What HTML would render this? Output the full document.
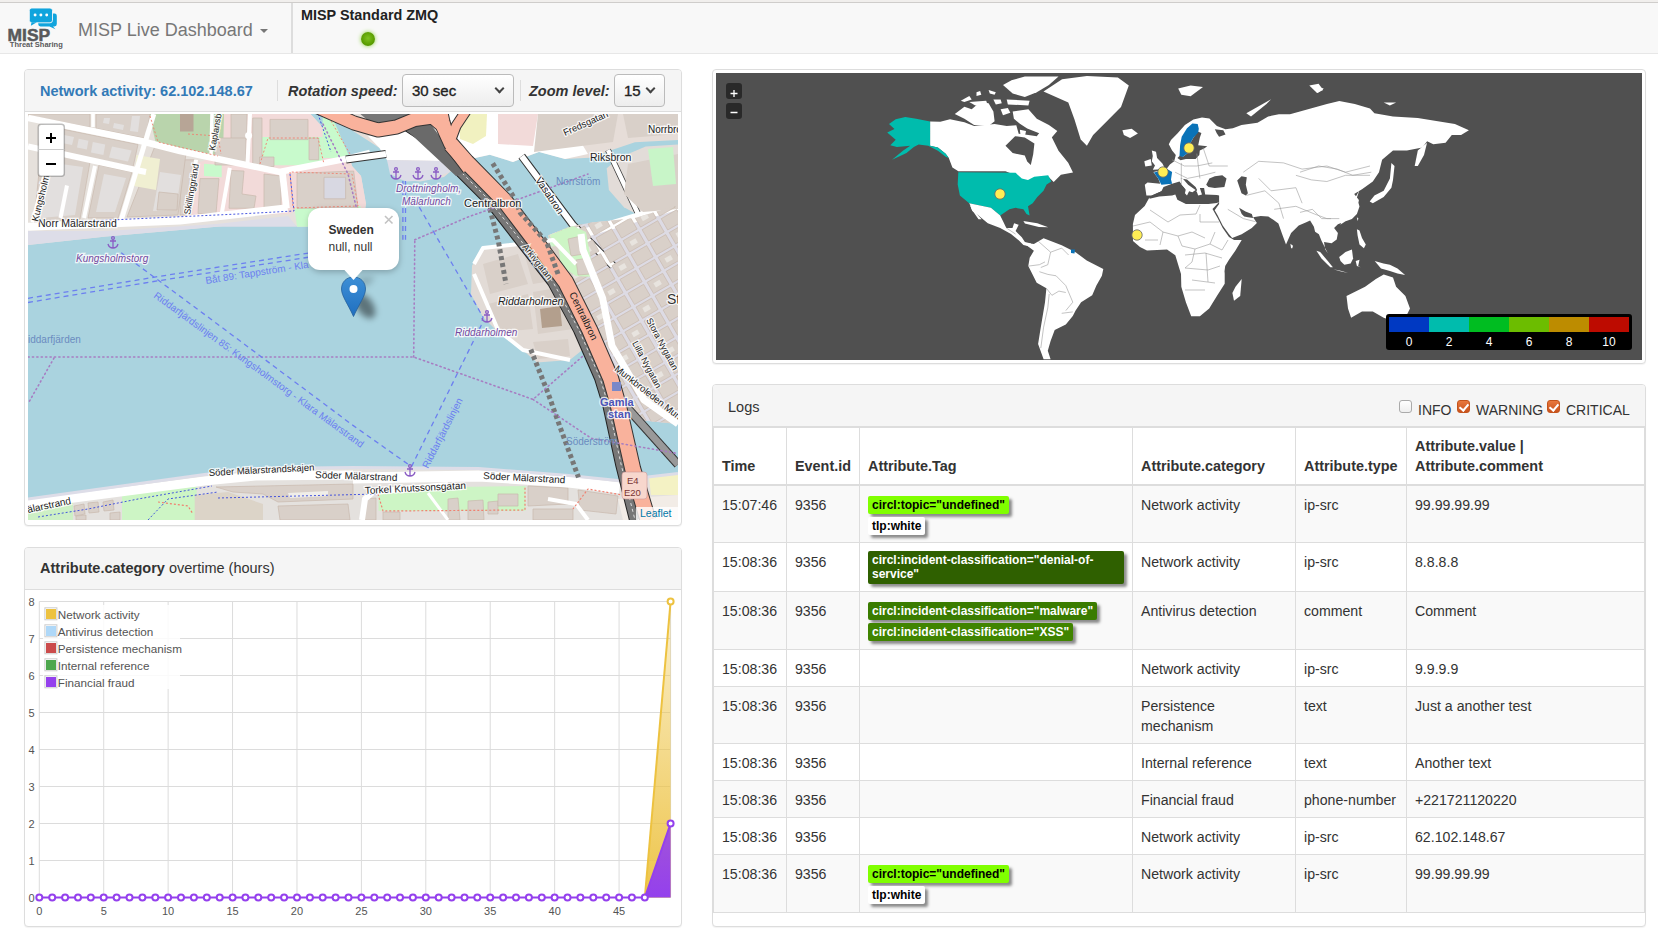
<!DOCTYPE html>
<html><head><meta charset="utf-8">
<style>
*{box-sizing:border-box;margin:0;padding:0}
html,body{width:1658px;height:936px;overflow:hidden;background:#fff;font-family:"Liberation Sans",sans-serif;font-size:14px;color:#333;line-height:20px}
.abs{position:absolute}
#topstrip{left:0;top:0;width:1658px;height:3px;background:#f1efed;border-bottom:1px solid #cfcdcb}
#nav{left:0;top:3px;width:1658px;height:51px;background:#f8f8f8;border-bottom:1px solid #e7e7e7}
#navdiv{left:291px;top:3px;width:2px;height:50px;background:#ddd}
.panel{position:absolute;border:1px solid #ddd;border-radius:4px;background:#fff;overflow:hidden;box-shadow:0 1px 1px rgba(0,0,0,.05)}
.ph{position:absolute;left:0;top:0;right:0;background:#f5f5f5;border-bottom:1px solid #ddd}
.sel{position:absolute;border:1px solid #bbb;border-radius:4px;background:linear-gradient(#fff,#ededed);font-size:15px;color:#222}
.chev{position:absolute;width:7px;height:7px;border-right:2px solid #444;border-bottom:2px solid #444;transform:rotate(45deg)}
table.t{position:absolute;border-collapse:collapse;font-size:14px}
table.t td,table.t th{border:1px solid #ddd;padding:8px;vertical-align:top;line-height:20px;text-align:left}
table.t td{padding:9px 8px 7px;font-size:14.15px}
table.t th{vertical-align:bottom;border-bottom:2px solid #ddd;font-weight:bold;font-size:14.4px}
table.t tr.odd td{background:#f9f9f9}
.lbl{display:block;width:fit-content;font-weight:bold;font-size:12px;line-height:14px;padding:2px 4px 2px 4px;border-radius:2px;box-shadow:3px 3px 3px rgba(0,0,0,.45);margin-top:1px}
.lbl.l2{margin-top:3px}
.ch{height:20px}
.cb{width:13px;height:13px;border:1px solid #aaa;border-radius:3px;background:linear-gradient(#fff,#eee)}
.cb.on{border:1px solid #c4541c;background:linear-gradient(#e8783e,#c9521c)}
.cb.on:after{content:"";position:absolute;left:3px;top:1px;width:4px;height:7px;border-right:2px solid #fff;border-bottom:2px solid #fff;transform:rotate(40deg)}
</style></head><body>
<div id="topstrip" class="abs"></div>
<div id="nav" class="abs"></div>
<div id="navdiv" class="abs"></div>
<!-- logo -->
<svg class="abs" style="left:0;top:0" width="70" height="52" viewBox="0 0 70 52">
  <path d="M40.5,13.4 h14 a2.3,2.3 0 0 1 2.3,2.3 v8.4 a2.3,2.3 0 0 1 -2.3,2.3 h-1.5 l2.5,2.8 -6,-2.8 h-9 a2.3,2.3 0 0 1 -2.3,-2.3 v-8.4 a2.3,2.3 0 0 1 2.3,-2.3z" fill="#10a4dd"/>
  <rect x="29.3" y="8" width="23.2" height="14.8" rx="2.5" fill="#10a4dd" stroke="#f8f8f8" stroke-width="0.9"/>
  <path d="M31.5,22.3 l-0.6,3.4 6,-3.4z" fill="#10a4dd"/>
  <circle cx="35.1" cy="15" r="1.45" fill="#fff"/><circle cx="40.9" cy="15" r="1.45" fill="#fff"/><circle cx="46.7" cy="15" r="1.45" fill="#fff"/>
  <text x="7.6" y="40.5" font-family="Liberation Sans" font-weight="bold" font-size="16" fill="#58595b" textLength="42.5" lengthAdjust="spacingAndGlyphs" stroke="#58595b" stroke-width="0.5">MISP</text>
  <text x="9.8" y="47.4" font-family="Liberation Sans" font-weight="bold" font-size="7" fill="#58595b" textLength="53" lengthAdjust="spacingAndGlyphs">Threat Sharing</text>
</svg>
<div class="abs" style="left:78px;top:18px;font-size:18px;line-height:24px;color:#777">MISP Live Dashboard</div>
<div class="abs" style="left:260px;top:29px;width:0;height:0;border-left:4px solid transparent;border-right:4px solid transparent;border-top:4px solid #777"></div>
<div class="abs" style="left:301px;top:5px;font-size:14.4px;font-weight:bold;color:#222;line-height:20px">MISP Standard ZMQ</div>
<div class="abs" style="left:361px;top:32px;width:14px;height:14px;border-radius:50%;background:radial-gradient(circle at 50% 45%,#7dc21e 0,#5a9e00 60%,#4a8a00 100%);box-shadow:0 0 4px #8bd23a"></div>

<!-- left panel 1 -->
<div class="panel" style="left:24px;top:69px;width:658px;height:457px">
  <div class="ph" style="height:42px"></div>
</div>
<div class="abs" style="left:40px;top:81px;font-size:14.5px;font-weight:bold;color:#337ab7">Network activity: 62.102.148.67</div>
<div class="abs" style="left:277px;top:80px;width:1px;height:21px;background:#ddd"></div>
<div class="abs" style="left:288px;top:81px;font-size:14.5px;font-weight:bold;font-style:italic;color:#333">Rotation speed:</div>
<div class="sel" style="left:402px;top:74px;width:112px;height:33px"><span class="abs" style="left:9px;top:6px;-webkit-text-stroke:0.35px #222">30 sec</span><span class="chev" style="left:93px;top:10px"></span></div>
<div class="abs" style="left:520px;top:80px;width:1px;height:21px;background:#ddd"></div>
<div class="abs" style="left:529px;top:81px;font-size:14.5px;font-weight:bold;font-style:italic;color:#333">Zoom level:</div>
<div class="sel" style="left:614px;top:74px;width:51px;height:33px"><span class="abs" style="left:9px;top:6px;-webkit-text-stroke:0.35px #222">15</span><span class="chev" style="left:32px;top:10px"></span></div>
<svg class="abs" style="left:28px;top:114px" width="650" height="406" viewBox="0 0 650 406">
<rect x="0" y="0" width="650" height="406" fill="#aad3df"/>
<path d="M0,0 L282.5,0 L321,42 L324,52 L333,62 L338,90 L336,112 L269,112.7 L260,104 L188.6,112.7 L78,122.5 L0,131Z" fill="#e6e1dc" />
<path d="M298.8,0 L351.5,34 L358.8,45.5 L369.4,65 L392,67.4 L416,63 L435.6,46.5 L461.8,40.7 L485,48 L496.7,43.6 L511.2,37.8 L537.3,45 L566.4,43.6 L580.9,36.9 L606.9,28.2 L650,26 L650,0Z" fill="#e6ddd8" />
<path d="M340,22 L356,18 L404,5 L420,30 L428,48 L414,47 L359,46 L351.5,34Z" fill="#ffffff" />
<path d="M359,46 L414,47 L422,58 L400,66 L378,67.6 L362,60Z" fill="#dddde8" />
<path d="M578.7,54.2 L591.7,43.4 L617.7,32.5 L650,30.4 L650,101.9 L615.5,104 L596,93.2 L580.9,75.9Z" fill="#e2dcd8" />
<path d="M520,121.4 L541.8,112.7 L563.5,108.4 L606.9,104 L650,91 L650,310 L598.2,305 L581,285.4 L570,268 L561.4,235.5 L555,203 L541.8,160Z" fill="#dddbe4" />
<path d="M446.4,147.4 L455,134.4 L490,128 L524.5,125.8 L545,150 L552,190 L555,235.5 L541.8,246 L509,248.5 L494,235.5 L468,216 L455,203 L443,180 L444,151.8Z" fill="#e2dbd6" />
<path d="M170,0 L282.5,0 L321,42 L324,52 L333,62 L338,90 L336,95 L269,95 L262,100 L160,103 L166,50 L184,44Z" fill="#f2dad9" />
<path d="M152,0 L196,0 L195,43 L152,36 L128,30 L121,0Z" fill="#b9d4ac" />
<path d="M152,0 L165.5,0 L165.5,17.5 L152,17.5Z" fill="#b7a596" />
<path d="M232.8,22.9 L294.7,22.9 L294.7,51.2 L232.8,51.2Z" fill="#c8facc" />
<path d="M294.7,0 L303,0 L321,42 L320,44 L294.7,44Z" fill="#c8facc" />
<path d="M176,49.8 L193.7,51 L193.7,63.3 L176,62Z" fill="#c8facc" />
<path d="M266.5,94.3 L332.4,92 L336,112 L269,112.7Z" fill="#c8facc" />
<path d="M203,0 L219,0 L219,25.6 L203,25.6Z" fill="#d9d0c9" stroke="#c8b9ad" stroke-width="0.7"/>
<path d="M187,24 L218,24 L218,51 L187,51Z" fill="#d9d0c9" stroke="#c8b9ad" stroke-width="0.7"/>
<path d="M224.7,4 L234,4 L234,52.5 L224.7,52.5Z" fill="#d9d0c9" stroke="#c8b9ad" stroke-width="0.7"/>
<path d="M242,5.4 L280,5.4 L280,25.6 L242,25.6Z" fill="#d9d0c9" stroke="#c8b9ad" stroke-width="0.7"/>
<path d="M281,24 L290.7,24 L290.7,45.8 L281,45.8Z" fill="#d9d0c9" stroke="#c8b9ad" stroke-width="0.7"/>
<path d="M231.5,43 L246,43 L246,52.5 L231.5,52.5Z" fill="#d9d0c9" stroke="#c8b9ad" stroke-width="0.7"/>
<path d="M152,45.8 L166.8,45.8 L162,101 L152,101Z" fill="#d9d0c9" stroke="#c8b9ad" stroke-width="0.7"/>
<path d="M172,64.6 L191,64.6 L188,99.6 L170,99.6Z" fill="#d9d0c9" stroke="#c8b9ad" stroke-width="0.7"/>
<path d="M203,56.5 L216,57 L214,80 L228,82 L226,94.3 L201,94.3Z" fill="#d9d0c9" stroke="#c8b9ad" stroke-width="0.7"/>
<path d="M236,60 L253,62 L253,94.3 L236,94.3Z" fill="#d9d0c9" stroke="#c8b9ad" stroke-width="0.7"/>
<path d="M269,59.3 L325.7,57 L330,94.3 L269,94.3Z" fill="#d9d0c9" stroke="#c8b9ad" stroke-width="0.7"/>
<path d="M296,63.3 L317.6,63.3 L317.6,84.8 L296,84.8Z" fill="#d8d8e2" stroke="#c8b9ad" stroke-width="0.7"/>
<path d="M0,0 L62,0 L62,13.5 L0,1.5Z" fill="#d9d0c9" stroke="#c8b9ad" stroke-width="0.7"/>
<path d="M68,0 L122,0 L118,24.5 L68,14.5Z" fill="#d9d0c9" stroke="#c8b9ad" stroke-width="0.7"/>
<path d="M14,11 L110,30.5 L105,53 L10,33Z" fill="#d9d0c9" stroke="#c8b9ad" stroke-width="0.7"/>
<path d="M127,32 L158,39 L150,101 L99,103Z" fill="#d9d0c9" stroke="#c8b9ad" stroke-width="0.7"/>
<path d="M13,38 L62,48 L52,105 L6,108Z" fill="#d9d0c9" stroke="#c8b9ad" stroke-width="0.7"/>
<path d="M71,51 L104,58 L90,104 L60,104Z" fill="#d9d0c9" stroke="#c8b9ad" stroke-width="0.7"/>
<path d="M50.7,24.8 L60.4,26.8 L58.8,35.6 L49,33.6Z" fill="#e2dfde" />
<path d="M64.8,28 L77.2,30.6 L75.4,41 L63,38.4Z" fill="#e2dfde" />
<path d="M84,32.4 L103.6,36.5 L100,47.5 L81,43.5Z" fill="#e2dfde" />
<path d="M36,21 L46,23 L44,31 L34,29Z" fill="#e2dfde" />
<path d="M18,48 L55,53 L47,101 L12,104Z" fill="#e2dfde" />
<path d="M76,60 L98,64 L87,98 L68,98Z" fill="#e2dfde" />
<path d="M132,58 L153,61 L148,96 L125,97Z" fill="#e2dfde" />
<path d="M76,4 L82,4 L81,10 L75,9Z" fill="#e2dfde" />
<path d="M86,9 L96,11 L95,16 L85,14Z" fill="#e2dfde" />
<path d="M104,2 L112,2 L110,18 L102,17Z" fill="#e2dfde" />
<path d="M108.4,41 L132,45 L128,76 L106,72Z" fill="#f0efd2" />
<path d="M131,78 L150,80 L149,96 L129,96Z" fill="#d9d0c9" stroke="#c8b9ad" stroke-width="0.7"/>
<path d="M0,4 L113,27 L152,37 L251.6,57.9 L320.3,44.4 L342,39" fill="none" stroke="#ffffff" stroke-width="6.5" stroke-linejoin="round" />
<path d="M0,32.4 L108,56 L118,58" fill="none" stroke="#ffffff" stroke-width="6" stroke-linejoin="round" />
<path d="M65,0 L65,13" fill="none" stroke="#ffffff" stroke-width="3.5" stroke-linejoin="round" />
<path d="M125.8,0 L93.2,106" fill="none" stroke="#ffffff" stroke-width="5" stroke-linejoin="round" />
<path d="M67,52 L56,104" fill="none" stroke="#ffffff" stroke-width="4" stroke-linejoin="round" />
<path d="M39,71.5 L32.5,104" fill="none" stroke="#ffffff" stroke-width="4" stroke-linejoin="round" />
<path d="M168,45.8 L160,101" fill="none" stroke="#ffffff" stroke-width="4" stroke-linejoin="round" />
<path d="M201.8,53.9 L193.7,99.6" fill="none" stroke="#ffffff" stroke-width="4" stroke-linejoin="round" />
<path d="M222,0 L219.3,52.5" fill="none" stroke="#ffffff" stroke-width="4" stroke-linejoin="round" />
<circle cx="220.6" cy="21.5" r="3.5" fill="#fff"/>
<path d="M184,0 L183,43" fill="none" stroke="#ffffff" stroke-width="3.5" stroke-linejoin="round" />
<path d="M254.3,57.9 L258.4,94.3" fill="none" stroke="#ffffff" stroke-width="6.7" stroke-linejoin="round" />
<path d="M0,112.7 L152,106.4 L259.7,94.3" fill="none" stroke="#ffffff" stroke-width="8" stroke-linejoin="round" />
<path d="M21.7,39 L4.3,108.4" fill="none" stroke="#ffffff" stroke-width="3.5" stroke-linejoin="round" />
<path d="M318,45.5 L358,40" fill="none" stroke="#333" stroke-width="8" stroke-linejoin="round" />
<path d="M318,45.5 L358,40" fill="none" stroke="#ffffff" stroke-width="6" stroke-linejoin="round" />
<path d="M122,2 L130,28 L190,42" fill="none" stroke="#f08070" stroke-width="0.9" stroke-linejoin="round" stroke-dasharray="2 2"/>
<path d="M160,20 L190,22 L193,40" fill="none" stroke="#f08070" stroke-width="0.9" stroke-linejoin="round" stroke-dasharray="2 2"/>
<path d="M232,50 L240,24 L290,24 L296,50" fill="none" stroke="#f08070" stroke-width="0.9" stroke-linejoin="round" stroke-dasharray="2 2"/>
<path d="M262,58 L265,94 L330,92 L324,60 L262,58" fill="none" stroke="#f08070" stroke-width="0.9" stroke-linejoin="round" stroke-dasharray="2 2"/>
<path d="M299,0 L322,40" fill="none" stroke="#f08070" stroke-width="0.9" stroke-linejoin="round" stroke-dasharray="2 2"/>
<path d="M262,60 L266,97 L210,100 L40,108" fill="none" stroke="#3344dd" stroke-width="0.9" stroke-linejoin="round" stroke-dasharray="2 2"/>
<path d="M290,0 L303,38" fill="none" stroke="#3344dd" stroke-width="0.9" stroke-linejoin="round" stroke-dasharray="2 2"/>
<path d="M0,117 L78,117 L188.6,110 L260,102 L269,112.7 L188.6,112.7 L78,122.5 L0,131Z" fill="#dddde8" />
<path d="M420,0 L520,0 L545,15 L560,40 L537,45 L511,38 L497,43 L485,48 L461.8,40.7 L435.6,46.5Z" fill="#ffffff" />
<path d="M431,0 L459,0 L458,22 L445,30 L432,25Z" fill="#f1f1c0" />
<path d="M470,0 L510,0 L505,32 L470,30Z" fill="#f2dad9" />
<path d="M510,0 L590,0 L585,28 L506,38Z" fill="#d9d0c9" />
<path d="M595,0 L650,0 L650,20 L600,24Z" fill="#d9d0c9" />
<path d="M493.7,42.2 L544.6,110.5 L585,151.8" fill="none" stroke="#333" stroke-width="8" stroke-linejoin="round" />
<path d="M493.7,42.2 L544.6,110.5 L585,151.8" fill="none" stroke="#ffffff" stroke-width="6" stroke-linejoin="round" />
<path d="M580,36 L612,104" fill="none" stroke="#333" stroke-width="6" stroke-linejoin="round" />
<path d="M580,36 L612,104" fill="none" stroke="#ffffff" stroke-width="4.5" stroke-linejoin="round" />
<path d="M553,120 L650,91" fill="none" stroke="#ffffff" stroke-width="9" stroke-linejoin="round" />
<path d="M520,121.4 L541.8,112.7 L548,128 L530,160Z" fill="#d0f5d0" />
<path d="M600,50 L650,40 L650,95 L615,98 L596,80Z" fill="#d9d0c9" />
<path d="M620,35 L645,33 L648,70 L625,72Z" fill="#c8f5c8" />
<clipPath id="gsclip"><path d="M520,121.4 L541.8,112.7 L563.5,108.4 L606.9,104 L650,91 L650,310 L598.2,305 L581,285.4 L570,268 L561.4,235.5 L555,203 L541.8,160Z"/></clipPath>
<g clip-path="url(#gsclip)">
<path d="M413.7,120.6 L420.2,131.8 L435.8,122.8 L429.3,111.6Z" fill="#d9d0c9" stroke="#c8b9ad" stroke-width="0.7"/>
<path d="M432.7,109.6 L439.2,120.8 L454.8,111.8 L448.3,100.6Z" fill="#d9d0c9" stroke="#c8b9ad" stroke-width="0.7"/>
<path d="M439.1,110.5 L441.6,114.9 L447.6,111.4 L445.1,107.0Z" fill="#e8e4df" />
<path d="M451.8,98.6 L458.3,109.8 L473.9,100.8 L467.4,89.6Z" fill="#d9d0c9" stroke="#c8b9ad" stroke-width="0.7"/>
<path d="M470.8,87.6 L477.3,98.8 L492.9,89.8 L486.4,78.6Z" fill="#d9d0c9" stroke="#c8b9ad" stroke-width="0.7"/>
<path d="M489.9,76.6 L496.4,87.8 L512.0,78.8 L505.5,67.6Z" fill="#d9d0c9" stroke="#c8b9ad" stroke-width="0.7"/>
<path d="M496.2,77.5 L498.7,81.9 L504.8,78.4 L502.3,74.0Z" fill="#e8e4df" />
<path d="M508.9,65.6 L515.4,76.8 L531.0,67.8 L524.5,56.6Z" fill="#d9d0c9" stroke="#c8b9ad" stroke-width="0.7"/>
<path d="M528.0,54.6 L534.5,65.8 L550.1,56.8 L543.6,45.6Z" fill="#d9d0c9" stroke="#c8b9ad" stroke-width="0.7"/>
<path d="M547.1,43.6 L553.6,54.8 L569.1,45.8 L562.6,34.6Z" fill="#d9d0c9" stroke="#c8b9ad" stroke-width="0.7"/>
<path d="M553.4,44.5 L555.9,48.9 L561.9,45.4 L559.4,41.0Z" fill="#e8e4df" />
<path d="M566.1,32.6 L572.6,43.8 L588.2,34.8 L581.7,23.6Z" fill="#d9d0c9" stroke="#c8b9ad" stroke-width="0.7"/>
<path d="M585.2,21.6 L591.7,32.8 L607.2,23.8 L600.7,12.6Z" fill="#d9d0c9" stroke="#c8b9ad" stroke-width="0.7"/>
<path d="M604.2,10.6 L610.7,21.8 L626.3,12.8 L619.8,1.6Z" fill="#d9d0c9" stroke="#c8b9ad" stroke-width="0.7"/>
<path d="M610.5,11.5 L613.0,15.9 L619.1,12.4 L616.6,8.0Z" fill="#e8e4df" />
<path d="M623.3,-0.4 L629.8,10.8 L645.3,1.8 L638.8,-9.4Z" fill="#d9d0c9" stroke="#c8b9ad" stroke-width="0.7"/>
<path d="M642.3,-11.4 L648.8,-0.2 L664.4,-9.2 L657.9,-20.4Z" fill="#d9d0c9" stroke="#c8b9ad" stroke-width="0.7"/>
<path d="M661.4,-22.4 L667.9,-11.2 L683.5,-20.2 L677.0,-31.4Z" fill="#d9d0c9" stroke="#c8b9ad" stroke-width="0.7"/>
<path d="M667.7,-21.5 L670.2,-17.1 L676.3,-20.6 L673.8,-25.0Z" fill="#e8e4df" />
<path d="M421.7,134.4 L428.2,145.7 L443.8,136.7 L437.3,125.4Z" fill="#d9d0c9" stroke="#c8b9ad" stroke-width="0.7"/>
<path d="M428.0,135.4 L430.5,139.7 L436.6,136.2 L434.1,131.9Z" fill="#e8e4df" />
<path d="M440.7,123.4 L447.2,134.7 L462.8,125.7 L456.3,114.4Z" fill="#d9d0c9" stroke="#c8b9ad" stroke-width="0.7"/>
<path d="M459.8,112.4 L466.3,123.7 L481.9,114.7 L475.4,103.4Z" fill="#d9d0c9" stroke="#c8b9ad" stroke-width="0.7"/>
<path d="M478.8,101.4 L485.3,112.7 L500.9,103.7 L494.4,92.4Z" fill="#d9d0c9" stroke="#c8b9ad" stroke-width="0.7"/>
<path d="M485.2,102.4 L487.7,106.7 L493.7,103.2 L491.2,98.9Z" fill="#e8e4df" />
<path d="M497.9,90.4 L504.4,101.7 L520.0,92.7 L513.5,81.4Z" fill="#d9d0c9" stroke="#c8b9ad" stroke-width="0.7"/>
<path d="M516.9,79.4 L523.4,90.7 L539.0,81.7 L532.5,70.4Z" fill="#d9d0c9" stroke="#c8b9ad" stroke-width="0.7"/>
<path d="M536.0,68.4 L542.5,79.7 L558.1,70.7 L551.6,59.4Z" fill="#d9d0c9" stroke="#c8b9ad" stroke-width="0.7"/>
<path d="M542.3,69.4 L544.8,73.7 L550.9,70.2 L548.4,65.9Z" fill="#e8e4df" />
<path d="M555.1,57.4 L561.6,68.7 L577.1,59.7 L570.6,48.4Z" fill="#d9d0c9" stroke="#c8b9ad" stroke-width="0.7"/>
<path d="M574.1,46.4 L580.6,57.7 L596.2,48.7 L589.7,37.4Z" fill="#d9d0c9" stroke="#c8b9ad" stroke-width="0.7"/>
<path d="M593.2,35.4 L599.7,46.7 L615.2,37.7 L608.7,26.4Z" fill="#d9d0c9" stroke="#c8b9ad" stroke-width="0.7"/>
<path d="M599.5,36.4 L602.0,40.7 L608.0,37.2 L605.5,32.9Z" fill="#e8e4df" />
<path d="M612.2,24.4 L618.7,35.7 L634.3,26.7 L627.8,15.4Z" fill="#d9d0c9" stroke="#c8b9ad" stroke-width="0.7"/>
<path d="M631.3,13.4 L637.8,24.7 L653.3,15.7 L646.8,4.4Z" fill="#d9d0c9" stroke="#c8b9ad" stroke-width="0.7"/>
<path d="M650.3,2.4 L656.8,13.7 L672.4,4.7 L665.9,-6.6Z" fill="#d9d0c9" stroke="#c8b9ad" stroke-width="0.7"/>
<path d="M656.6,3.4 L659.1,7.7 L665.2,4.2 L662.7,-0.1Z" fill="#e8e4df" />
<path d="M669.4,-8.6 L675.9,2.7 L691.5,-6.3 L685.0,-17.6Z" fill="#d9d0c9" stroke="#c8b9ad" stroke-width="0.7"/>
<path d="M429.7,148.3 L436.2,159.5 L451.8,150.5 L445.3,139.3Z" fill="#d9d0c9" stroke="#c8b9ad" stroke-width="0.7"/>
<path d="M448.7,137.3 L455.2,148.5 L470.8,139.5 L464.3,128.3Z" fill="#d9d0c9" stroke="#c8b9ad" stroke-width="0.7"/>
<path d="M467.8,126.3 L474.3,137.5 L489.9,128.5 L483.4,117.3Z" fill="#d9d0c9" stroke="#c8b9ad" stroke-width="0.7"/>
<path d="M474.1,127.3 L476.6,131.6 L482.7,128.1 L480.2,123.8Z" fill="#e8e4df" />
<path d="M486.8,115.3 L493.3,126.5 L508.9,117.5 L502.4,106.3Z" fill="#d9d0c9" stroke="#c8b9ad" stroke-width="0.7"/>
<path d="M505.9,104.3 L512.4,115.5 L528.0,106.5 L521.5,95.3Z" fill="#d9d0c9" stroke="#c8b9ad" stroke-width="0.7"/>
<path d="M524.9,93.3 L531.4,104.5 L547.0,95.5 L540.5,84.3Z" fill="#d9d0c9" stroke="#c8b9ad" stroke-width="0.7"/>
<path d="M531.3,94.3 L533.8,98.6 L539.8,95.1 L537.3,90.8Z" fill="#e8e4df" />
<path d="M544.0,82.3 L550.5,93.5 L566.1,84.5 L559.6,73.3Z" fill="#d9d0c9" stroke="#c8b9ad" stroke-width="0.7"/>
<path d="M563.1,71.3 L569.6,82.5 L585.1,73.5 L578.6,62.3Z" fill="#d9d0c9" stroke="#c8b9ad" stroke-width="0.7"/>
<path d="M582.1,60.3 L588.6,71.5 L604.2,62.5 L597.7,51.3Z" fill="#d9d0c9" stroke="#c8b9ad" stroke-width="0.7"/>
<path d="M588.4,61.3 L590.9,65.6 L597.0,62.1 L594.5,57.8Z" fill="#e8e4df" />
<path d="M601.2,49.3 L607.7,60.5 L623.2,51.5 L616.7,40.3Z" fill="#d9d0c9" stroke="#c8b9ad" stroke-width="0.7"/>
<path d="M620.2,38.3 L626.7,49.5 L642.3,40.5 L635.8,29.3Z" fill="#d9d0c9" stroke="#c8b9ad" stroke-width="0.7"/>
<path d="M639.3,27.3 L645.8,38.5 L661.3,29.5 L654.8,18.3Z" fill="#d9d0c9" stroke="#c8b9ad" stroke-width="0.7"/>
<path d="M645.6,28.3 L648.1,32.6 L654.2,29.1 L651.7,24.8Z" fill="#e8e4df" />
<path d="M658.3,16.3 L664.8,27.5 L680.4,18.5 L673.9,7.3Z" fill="#d9d0c9" stroke="#c8b9ad" stroke-width="0.7"/>
<path d="M677.4,5.3 L683.9,16.5 L699.5,7.5 L693.0,-3.7Z" fill="#d9d0c9" stroke="#c8b9ad" stroke-width="0.7"/>
<path d="M437.7,162.1 L444.2,173.4 L459.8,164.4 L453.3,153.1Z" fill="#d9d0c9" stroke="#c8b9ad" stroke-width="0.7"/>
<path d="M456.7,151.1 L463.2,162.4 L478.8,153.4 L472.3,142.1Z" fill="#d9d0c9" stroke="#c8b9ad" stroke-width="0.7"/>
<path d="M463.1,152.1 L465.6,156.4 L471.6,152.9 L469.1,148.6Z" fill="#e8e4df" />
<path d="M475.8,140.1 L482.3,151.4 L497.9,142.4 L491.4,131.1Z" fill="#d9d0c9" stroke="#c8b9ad" stroke-width="0.7"/>
<path d="M494.8,129.1 L501.3,140.4 L516.9,131.4 L510.4,120.1Z" fill="#d9d0c9" stroke="#c8b9ad" stroke-width="0.7"/>
<path d="M513.9,118.1 L520.4,129.4 L536.0,120.4 L529.5,109.1Z" fill="#d9d0c9" stroke="#c8b9ad" stroke-width="0.7"/>
<path d="M520.2,119.1 L522.7,123.4 L528.8,119.9 L526.3,115.6Z" fill="#e8e4df" />
<path d="M532.9,107.1 L539.4,118.4 L555.0,109.4 L548.5,98.1Z" fill="#d9d0c9" stroke="#c8b9ad" stroke-width="0.7"/>
<path d="M552.0,96.1 L558.5,107.4 L574.1,98.4 L567.6,87.1Z" fill="#d9d0c9" stroke="#c8b9ad" stroke-width="0.7"/>
<path d="M571.1,85.1 L577.6,96.4 L593.1,87.4 L586.6,76.1Z" fill="#d9d0c9" stroke="#c8b9ad" stroke-width="0.7"/>
<path d="M577.4,86.1 L579.9,90.4 L585.9,86.9 L583.4,82.6Z" fill="#e8e4df" />
<path d="M590.1,74.1 L596.6,85.4 L612.2,76.4 L605.7,65.1Z" fill="#d9d0c9" stroke="#c8b9ad" stroke-width="0.7"/>
<path d="M609.2,63.1 L615.7,74.4 L631.2,65.4 L624.7,54.1Z" fill="#d9d0c9" stroke="#c8b9ad" stroke-width="0.7"/>
<path d="M628.2,52.1 L634.7,63.4 L650.3,54.4 L643.8,43.1Z" fill="#d9d0c9" stroke="#c8b9ad" stroke-width="0.7"/>
<path d="M634.5,53.1 L637.0,57.4 L643.1,53.9 L640.6,49.6Z" fill="#e8e4df" />
<path d="M647.3,41.1 L653.8,52.4 L669.3,43.4 L662.8,32.1Z" fill="#d9d0c9" stroke="#c8b9ad" stroke-width="0.7"/>
<path d="M666.3,30.1 L672.8,41.4 L688.4,32.4 L681.9,21.1Z" fill="#d9d0c9" stroke="#c8b9ad" stroke-width="0.7"/>
<path d="M685.4,19.1 L691.9,30.4 L707.5,21.4 L701.0,10.1Z" fill="#d9d0c9" stroke="#c8b9ad" stroke-width="0.7"/>
<path d="M691.7,20.1 L694.2,24.4 L700.3,20.9 L697.8,16.6Z" fill="#e8e4df" />
<path d="M445.7,176.0 L452.2,187.3 L467.8,178.3 L461.3,167.0Z" fill="#d9d0c9" stroke="#c8b9ad" stroke-width="0.7"/>
<path d="M452.0,177.0 L454.5,181.3 L460.6,177.8 L458.1,173.5Z" fill="#e8e4df" />
<path d="M464.7,165.0 L471.2,176.3 L486.8,167.3 L480.3,156.0Z" fill="#d9d0c9" stroke="#c8b9ad" stroke-width="0.7"/>
<path d="M483.8,154.0 L490.3,165.3 L505.9,156.3 L499.4,145.0Z" fill="#d9d0c9" stroke="#c8b9ad" stroke-width="0.7"/>
<path d="M502.8,143.0 L509.3,154.3 L524.9,145.3 L518.4,134.0Z" fill="#d9d0c9" stroke="#c8b9ad" stroke-width="0.7"/>
<path d="M509.2,144.0 L511.7,148.3 L517.7,144.8 L515.2,140.5Z" fill="#e8e4df" />
<path d="M521.9,132.0 L528.4,143.3 L544.0,134.3 L537.5,123.0Z" fill="#d9d0c9" stroke="#c8b9ad" stroke-width="0.7"/>
<path d="M540.9,121.0 L547.4,132.3 L563.0,123.3 L556.5,112.0Z" fill="#d9d0c9" stroke="#c8b9ad" stroke-width="0.7"/>
<path d="M560.0,110.0 L566.5,121.3 L582.1,112.3 L575.6,101.0Z" fill="#d9d0c9" stroke="#c8b9ad" stroke-width="0.7"/>
<path d="M566.3,111.0 L568.8,115.3 L574.9,111.8 L572.4,107.5Z" fill="#e8e4df" />
<path d="M579.1,99.0 L585.6,110.3 L601.1,101.3 L594.6,90.0Z" fill="#d9d0c9" stroke="#c8b9ad" stroke-width="0.7"/>
<path d="M598.1,88.0 L604.6,99.3 L620.2,90.3 L613.7,79.0Z" fill="#d9d0c9" stroke="#c8b9ad" stroke-width="0.7"/>
<path d="M617.2,77.0 L623.7,88.3 L639.2,79.3 L632.7,68.0Z" fill="#d9d0c9" stroke="#c8b9ad" stroke-width="0.7"/>
<path d="M623.5,78.0 L626.0,82.3 L632.0,78.8 L629.5,74.5Z" fill="#e8e4df" />
<path d="M636.2,66.0 L642.7,77.3 L658.3,68.3 L651.8,57.0Z" fill="#d9d0c9" stroke="#c8b9ad" stroke-width="0.7"/>
<path d="M655.3,55.0 L661.8,66.3 L677.3,57.3 L670.8,46.0Z" fill="#d9d0c9" stroke="#c8b9ad" stroke-width="0.7"/>
<path d="M674.3,44.0 L680.8,55.3 L696.4,46.3 L689.9,35.0Z" fill="#d9d0c9" stroke="#c8b9ad" stroke-width="0.7"/>
<path d="M680.6,45.0 L683.1,49.3 L689.2,45.8 L686.7,41.5Z" fill="#e8e4df" />
<path d="M693.4,33.0 L699.9,44.3 L715.5,35.3 L709.0,24.0Z" fill="#d9d0c9" stroke="#c8b9ad" stroke-width="0.7"/>
<path d="M453.7,189.9 L460.2,201.1 L475.8,192.1 L469.3,180.9Z" fill="#d9d0c9" stroke="#c8b9ad" stroke-width="0.7"/>
<path d="M472.7,178.9 L479.2,190.1 L494.8,181.1 L488.3,169.9Z" fill="#d9d0c9" stroke="#c8b9ad" stroke-width="0.7"/>
<path d="M491.8,167.9 L498.3,179.1 L513.9,170.1 L507.4,158.9Z" fill="#d9d0c9" stroke="#c8b9ad" stroke-width="0.7"/>
<path d="M498.1,168.8 L500.6,173.2 L506.7,169.7 L504.2,165.3Z" fill="#e8e4df" />
<path d="M510.8,156.9 L517.3,168.1 L532.9,159.1 L526.4,147.9Z" fill="#d9d0c9" stroke="#c8b9ad" stroke-width="0.7"/>
<path d="M529.9,145.9 L536.4,157.1 L552.0,148.1 L545.5,136.9Z" fill="#d9d0c9" stroke="#c8b9ad" stroke-width="0.7"/>
<path d="M548.9,134.9 L555.4,146.1 L571.0,137.1 L564.5,125.9Z" fill="#d9d0c9" stroke="#c8b9ad" stroke-width="0.7"/>
<path d="M555.3,135.8 L557.8,140.2 L563.8,136.7 L561.3,132.3Z" fill="#e8e4df" />
<path d="M568.0,123.9 L574.5,135.1 L590.1,126.1 L583.6,114.9Z" fill="#d9d0c9" stroke="#c8b9ad" stroke-width="0.7"/>
<path d="M587.1,112.9 L593.6,124.1 L609.1,115.1 L602.6,103.9Z" fill="#d9d0c9" stroke="#c8b9ad" stroke-width="0.7"/>
<path d="M606.1,101.9 L612.6,113.1 L628.2,104.1 L621.7,92.9Z" fill="#d9d0c9" stroke="#c8b9ad" stroke-width="0.7"/>
<path d="M612.4,102.8 L614.9,107.2 L621.0,103.7 L618.5,99.3Z" fill="#e8e4df" />
<path d="M625.2,90.9 L631.7,102.1 L647.2,93.1 L640.7,81.9Z" fill="#d9d0c9" stroke="#c8b9ad" stroke-width="0.7"/>
<path d="M644.2,79.9 L650.7,91.1 L666.3,82.1 L659.8,70.9Z" fill="#d9d0c9" stroke="#c8b9ad" stroke-width="0.7"/>
<path d="M663.3,68.9 L669.8,80.1 L685.3,71.1 L678.8,59.9Z" fill="#d9d0c9" stroke="#c8b9ad" stroke-width="0.7"/>
<path d="M669.6,69.8 L672.1,74.2 L678.2,70.7 L675.7,66.3Z" fill="#e8e4df" />
<path d="M682.3,57.9 L688.8,69.1 L704.4,60.1 L697.9,48.9Z" fill="#d9d0c9" stroke="#c8b9ad" stroke-width="0.7"/>
<path d="M701.4,46.9 L707.9,58.1 L723.5,49.1 L717.0,37.9Z" fill="#d9d0c9" stroke="#c8b9ad" stroke-width="0.7"/>
<path d="M461.7,203.7 L468.2,215.0 L483.8,206.0 L477.3,194.7Z" fill="#d9d0c9" stroke="#c8b9ad" stroke-width="0.7"/>
<path d="M480.7,192.7 L487.2,204.0 L502.8,195.0 L496.3,183.7Z" fill="#d9d0c9" stroke="#c8b9ad" stroke-width="0.7"/>
<path d="M487.1,193.7 L489.6,198.0 L495.6,194.5 L493.1,190.2Z" fill="#e8e4df" />
<path d="M499.8,181.7 L506.3,193.0 L521.9,184.0 L515.4,172.7Z" fill="#d9d0c9" stroke="#c8b9ad" stroke-width="0.7"/>
<path d="M518.8,170.7 L525.3,182.0 L540.9,173.0 L534.4,161.7Z" fill="#d9d0c9" stroke="#c8b9ad" stroke-width="0.7"/>
<path d="M537.9,159.7 L544.4,171.0 L560.0,162.0 L553.5,150.7Z" fill="#d9d0c9" stroke="#c8b9ad" stroke-width="0.7"/>
<path d="M544.2,160.7 L546.7,165.0 L552.8,161.5 L550.3,157.2Z" fill="#e8e4df" />
<path d="M556.9,148.7 L563.4,160.0 L579.0,151.0 L572.5,139.7Z" fill="#d9d0c9" stroke="#c8b9ad" stroke-width="0.7"/>
<path d="M576.0,137.7 L582.5,149.0 L598.1,140.0 L591.6,128.7Z" fill="#d9d0c9" stroke="#c8b9ad" stroke-width="0.7"/>
<path d="M595.1,126.7 L601.6,138.0 L617.1,129.0 L610.6,117.7Z" fill="#d9d0c9" stroke="#c8b9ad" stroke-width="0.7"/>
<path d="M601.4,127.7 L603.9,132.0 L609.9,128.5 L607.4,124.2Z" fill="#e8e4df" />
<path d="M614.1,115.7 L620.6,127.0 L636.2,118.0 L629.7,106.7Z" fill="#d9d0c9" stroke="#c8b9ad" stroke-width="0.7"/>
<path d="M633.2,104.7 L639.7,116.0 L655.2,107.0 L648.7,95.7Z" fill="#d9d0c9" stroke="#c8b9ad" stroke-width="0.7"/>
<path d="M652.2,93.7 L658.7,105.0 L674.3,96.0 L667.8,84.7Z" fill="#d9d0c9" stroke="#c8b9ad" stroke-width="0.7"/>
<path d="M658.5,94.7 L661.0,99.0 L667.1,95.5 L664.6,91.2Z" fill="#e8e4df" />
<path d="M671.3,82.7 L677.8,94.0 L693.3,85.0 L686.8,73.7Z" fill="#d9d0c9" stroke="#c8b9ad" stroke-width="0.7"/>
<path d="M690.3,71.7 L696.8,83.0 L712.4,74.0 L705.9,62.7Z" fill="#d9d0c9" stroke="#c8b9ad" stroke-width="0.7"/>
<path d="M709.4,60.7 L715.9,72.0 L731.5,63.0 L725.0,51.7Z" fill="#d9d0c9" stroke="#c8b9ad" stroke-width="0.7"/>
<path d="M715.7,61.7 L718.2,66.0 L724.3,62.5 L721.8,58.2Z" fill="#e8e4df" />
<path d="M469.7,217.6 L476.2,228.8 L491.8,219.8 L485.3,208.6Z" fill="#d9d0c9" stroke="#c8b9ad" stroke-width="0.7"/>
<path d="M476.0,218.5 L478.5,222.9 L484.6,219.4 L482.1,215.0Z" fill="#e8e4df" />
<path d="M488.7,206.6 L495.2,217.8 L510.8,208.8 L504.3,197.6Z" fill="#d9d0c9" stroke="#c8b9ad" stroke-width="0.7"/>
<path d="M507.8,195.6 L514.3,206.8 L529.9,197.8 L523.4,186.6Z" fill="#d9d0c9" stroke="#c8b9ad" stroke-width="0.7"/>
<path d="M526.8,184.6 L533.3,195.8 L548.9,186.8 L542.4,175.6Z" fill="#d9d0c9" stroke="#c8b9ad" stroke-width="0.7"/>
<path d="M533.2,185.5 L535.7,189.9 L541.7,186.4 L539.2,182.0Z" fill="#e8e4df" />
<path d="M545.9,173.6 L552.4,184.8 L568.0,175.8 L561.5,164.6Z" fill="#d9d0c9" stroke="#c8b9ad" stroke-width="0.7"/>
<path d="M564.9,162.6 L571.4,173.8 L587.0,164.8 L580.5,153.6Z" fill="#d9d0c9" stroke="#c8b9ad" stroke-width="0.7"/>
<path d="M584.0,151.6 L590.5,162.8 L606.1,153.8 L599.6,142.6Z" fill="#d9d0c9" stroke="#c8b9ad" stroke-width="0.7"/>
<path d="M590.3,152.5 L592.8,156.9 L598.9,153.4 L596.4,149.0Z" fill="#e8e4df" />
<path d="M603.1,140.6 L609.6,151.8 L625.1,142.8 L618.6,131.6Z" fill="#d9d0c9" stroke="#c8b9ad" stroke-width="0.7"/>
<path d="M622.1,129.6 L628.6,140.8 L644.2,131.8 L637.7,120.6Z" fill="#d9d0c9" stroke="#c8b9ad" stroke-width="0.7"/>
<path d="M641.2,118.6 L647.7,129.8 L663.2,120.8 L656.7,109.6Z" fill="#d9d0c9" stroke="#c8b9ad" stroke-width="0.7"/>
<path d="M647.5,119.5 L650.0,123.9 L656.0,120.4 L653.5,116.0Z" fill="#e8e4df" />
<path d="M660.2,107.6 L666.7,118.8 L682.3,109.8 L675.8,98.6Z" fill="#d9d0c9" stroke="#c8b9ad" stroke-width="0.7"/>
<path d="M679.3,96.6 L685.8,107.8 L701.3,98.8 L694.8,87.6Z" fill="#d9d0c9" stroke="#c8b9ad" stroke-width="0.7"/>
<path d="M698.3,85.6 L704.8,96.8 L720.4,87.8 L713.9,76.6Z" fill="#d9d0c9" stroke="#c8b9ad" stroke-width="0.7"/>
<path d="M704.6,86.5 L707.1,90.9 L713.2,87.4 L710.7,83.0Z" fill="#e8e4df" />
<path d="M717.4,74.6 L723.9,85.8 L739.5,76.8 L733.0,65.6Z" fill="#d9d0c9" stroke="#c8b9ad" stroke-width="0.7"/>
<path d="M477.7,231.4 L484.2,242.7 L499.8,233.7 L493.3,222.4Z" fill="#d9d0c9" stroke="#c8b9ad" stroke-width="0.7"/>
<path d="M496.7,220.4 L503.2,231.7 L518.8,222.7 L512.3,211.4Z" fill="#d9d0c9" stroke="#c8b9ad" stroke-width="0.7"/>
<path d="M515.8,209.4 L522.3,220.7 L537.9,211.7 L531.4,200.4Z" fill="#d9d0c9" stroke="#c8b9ad" stroke-width="0.7"/>
<path d="M522.1,210.4 L524.6,214.7 L530.7,211.2 L528.2,206.9Z" fill="#e8e4df" />
<path d="M534.8,198.4 L541.3,209.7 L556.9,200.7 L550.4,189.4Z" fill="#d9d0c9" stroke="#c8b9ad" stroke-width="0.7"/>
<path d="M553.9,187.4 L560.4,198.7 L576.0,189.7 L569.5,178.4Z" fill="#d9d0c9" stroke="#c8b9ad" stroke-width="0.7"/>
<path d="M572.9,176.4 L579.4,187.7 L595.0,178.7 L588.5,167.4Z" fill="#d9d0c9" stroke="#c8b9ad" stroke-width="0.7"/>
<path d="M579.3,177.4 L581.8,181.7 L587.8,178.2 L585.3,173.9Z" fill="#e8e4df" />
<path d="M592.0,165.4 L598.5,176.7 L614.1,167.7 L607.6,156.4Z" fill="#d9d0c9" stroke="#c8b9ad" stroke-width="0.7"/>
<path d="M611.1,154.4 L617.6,165.7 L633.1,156.7 L626.6,145.4Z" fill="#d9d0c9" stroke="#c8b9ad" stroke-width="0.7"/>
<path d="M630.1,143.4 L636.6,154.7 L652.2,145.7 L645.7,134.4Z" fill="#d9d0c9" stroke="#c8b9ad" stroke-width="0.7"/>
<path d="M636.4,144.4 L638.9,148.7 L645.0,145.2 L642.5,140.9Z" fill="#e8e4df" />
<path d="M649.2,132.4 L655.7,143.7 L671.2,134.7 L664.7,123.4Z" fill="#d9d0c9" stroke="#c8b9ad" stroke-width="0.7"/>
<path d="M668.2,121.4 L674.7,132.7 L690.3,123.7 L683.8,112.4Z" fill="#d9d0c9" stroke="#c8b9ad" stroke-width="0.7"/>
<path d="M687.3,110.4 L693.8,121.7 L709.3,112.7 L702.8,101.4Z" fill="#d9d0c9" stroke="#c8b9ad" stroke-width="0.7"/>
<path d="M693.6,111.4 L696.1,115.7 L702.2,112.2 L699.7,107.9Z" fill="#e8e4df" />
<path d="M706.3,99.4 L712.8,110.7 L728.4,101.7 L721.9,90.4Z" fill="#d9d0c9" stroke="#c8b9ad" stroke-width="0.7"/>
<path d="M725.4,88.4 L731.9,99.7 L747.5,90.7 L741.0,79.4Z" fill="#d9d0c9" stroke="#c8b9ad" stroke-width="0.7"/>
<path d="M485.7,245.3 L492.2,256.5 L507.8,247.5 L501.3,236.3Z" fill="#d9d0c9" stroke="#c8b9ad" stroke-width="0.7"/>
<path d="M504.7,234.3 L511.2,245.5 L526.8,236.5 L520.3,225.3Z" fill="#d9d0c9" stroke="#c8b9ad" stroke-width="0.7"/>
<path d="M511.1,235.2 L513.6,239.6 L519.6,236.1 L517.1,231.7Z" fill="#e8e4df" />
<path d="M523.8,223.3 L530.3,234.5 L545.9,225.5 L539.4,214.3Z" fill="#d9d0c9" stroke="#c8b9ad" stroke-width="0.7"/>
<path d="M542.8,212.3 L549.3,223.5 L564.9,214.5 L558.4,203.3Z" fill="#d9d0c9" stroke="#c8b9ad" stroke-width="0.7"/>
<path d="M561.9,201.3 L568.4,212.5 L584.0,203.5 L577.5,192.3Z" fill="#d9d0c9" stroke="#c8b9ad" stroke-width="0.7"/>
<path d="M568.2,202.2 L570.7,206.6 L576.8,203.1 L574.3,198.7Z" fill="#e8e4df" />
<path d="M580.9,190.3 L587.4,201.5 L603.0,192.5 L596.5,181.3Z" fill="#d9d0c9" stroke="#c8b9ad" stroke-width="0.7"/>
<path d="M600.0,179.3 L606.5,190.5 L622.1,181.5 L615.6,170.3Z" fill="#d9d0c9" stroke="#c8b9ad" stroke-width="0.7"/>
<path d="M619.1,168.3 L625.6,179.5 L641.1,170.5 L634.6,159.3Z" fill="#d9d0c9" stroke="#c8b9ad" stroke-width="0.7"/>
<path d="M625.4,169.2 L627.9,173.6 L633.9,170.1 L631.4,165.7Z" fill="#e8e4df" />
<path d="M638.1,157.3 L644.6,168.5 L660.2,159.5 L653.7,148.3Z" fill="#d9d0c9" stroke="#c8b9ad" stroke-width="0.7"/>
<path d="M657.2,146.3 L663.7,157.5 L679.2,148.5 L672.7,137.3Z" fill="#d9d0c9" stroke="#c8b9ad" stroke-width="0.7"/>
<path d="M676.2,135.3 L682.7,146.5 L698.3,137.5 L691.8,126.3Z" fill="#d9d0c9" stroke="#c8b9ad" stroke-width="0.7"/>
<path d="M682.5,136.2 L685.0,140.6 L691.1,137.1 L688.6,132.7Z" fill="#e8e4df" />
<path d="M695.3,124.3 L701.8,135.5 L717.3,126.5 L710.8,115.3Z" fill="#d9d0c9" stroke="#c8b9ad" stroke-width="0.7"/>
<path d="M714.3,113.3 L720.8,124.5 L736.4,115.5 L729.9,104.3Z" fill="#d9d0c9" stroke="#c8b9ad" stroke-width="0.7"/>
<path d="M733.4,102.3 L739.9,113.5 L755.5,104.5 L749.0,93.3Z" fill="#d9d0c9" stroke="#c8b9ad" stroke-width="0.7"/>
<path d="M739.7,103.2 L742.2,107.6 L748.3,104.1 L745.8,99.7Z" fill="#e8e4df" />
<path d="M493.7,259.1 L500.2,270.4 L515.8,261.4 L509.3,250.1Z" fill="#d9d0c9" stroke="#c8b9ad" stroke-width="0.7"/>
<path d="M500.0,260.1 L502.5,264.4 L508.6,260.9 L506.1,256.6Z" fill="#e8e4df" />
<path d="M512.7,248.1 L519.2,259.4 L534.8,250.4 L528.3,239.1Z" fill="#d9d0c9" stroke="#c8b9ad" stroke-width="0.7"/>
<path d="M531.8,237.1 L538.3,248.4 L553.9,239.4 L547.4,228.1Z" fill="#d9d0c9" stroke="#c8b9ad" stroke-width="0.7"/>
<path d="M550.8,226.1 L557.3,237.4 L572.9,228.4 L566.4,217.1Z" fill="#d9d0c9" stroke="#c8b9ad" stroke-width="0.7"/>
<path d="M557.2,227.1 L559.7,231.4 L565.7,227.9 L563.2,223.6Z" fill="#e8e4df" />
<path d="M569.9,215.1 L576.4,226.4 L592.0,217.4 L585.5,206.1Z" fill="#d9d0c9" stroke="#c8b9ad" stroke-width="0.7"/>
<path d="M588.9,204.1 L595.4,215.4 L611.0,206.4 L604.5,195.1Z" fill="#d9d0c9" stroke="#c8b9ad" stroke-width="0.7"/>
<path d="M608.0,193.1 L614.5,204.4 L630.1,195.4 L623.6,184.1Z" fill="#d9d0c9" stroke="#c8b9ad" stroke-width="0.7"/>
<path d="M614.3,194.1 L616.8,198.4 L622.9,194.9 L620.4,190.6Z" fill="#e8e4df" />
<path d="M627.1,182.1 L633.6,193.4 L649.1,184.4 L642.6,173.1Z" fill="#d9d0c9" stroke="#c8b9ad" stroke-width="0.7"/>
<path d="M646.1,171.1 L652.6,182.4 L668.2,173.4 L661.7,162.1Z" fill="#d9d0c9" stroke="#c8b9ad" stroke-width="0.7"/>
<path d="M665.2,160.1 L671.7,171.4 L687.2,162.4 L680.7,151.1Z" fill="#d9d0c9" stroke="#c8b9ad" stroke-width="0.7"/>
<path d="M671.5,161.1 L674.0,165.4 L680.0,161.9 L677.5,157.6Z" fill="#e8e4df" />
<path d="M684.2,149.1 L690.7,160.4 L706.3,151.4 L699.8,140.1Z" fill="#d9d0c9" stroke="#c8b9ad" stroke-width="0.7"/>
<path d="M703.3,138.1 L709.8,149.4 L725.3,140.4 L718.8,129.1Z" fill="#d9d0c9" stroke="#c8b9ad" stroke-width="0.7"/>
<path d="M722.3,127.1 L728.8,138.4 L744.4,129.4 L737.9,118.1Z" fill="#d9d0c9" stroke="#c8b9ad" stroke-width="0.7"/>
<path d="M728.6,128.1 L731.1,132.4 L737.2,128.9 L734.7,124.6Z" fill="#e8e4df" />
<path d="M741.4,116.1 L747.9,127.4 L763.5,118.4 L757.0,107.1Z" fill="#d9d0c9" stroke="#c8b9ad" stroke-width="0.7"/>
<path d="M501.7,273.0 L508.2,284.2 L523.8,275.2 L517.3,264.0Z" fill="#d9d0c9" stroke="#c8b9ad" stroke-width="0.7"/>
<path d="M520.7,262.0 L527.2,273.2 L542.8,264.2 L536.3,253.0Z" fill="#d9d0c9" stroke="#c8b9ad" stroke-width="0.7"/>
<path d="M539.8,251.0 L546.3,262.2 L561.9,253.2 L555.4,242.0Z" fill="#d9d0c9" stroke="#c8b9ad" stroke-width="0.7"/>
<path d="M546.1,252.0 L548.6,256.3 L554.7,252.8 L552.2,248.5Z" fill="#e8e4df" />
<path d="M558.8,240.0 L565.3,251.2 L580.9,242.2 L574.4,231.0Z" fill="#d9d0c9" stroke="#c8b9ad" stroke-width="0.7"/>
<path d="M577.9,229.0 L584.4,240.2 L600.0,231.2 L593.5,220.0Z" fill="#d9d0c9" stroke="#c8b9ad" stroke-width="0.7"/>
<path d="M596.9,218.0 L603.4,229.2 L619.0,220.2 L612.5,209.0Z" fill="#d9d0c9" stroke="#c8b9ad" stroke-width="0.7"/>
<path d="M603.3,219.0 L605.8,223.3 L611.8,219.8 L609.3,215.5Z" fill="#e8e4df" />
<path d="M616.0,207.0 L622.5,218.2 L638.1,209.2 L631.6,198.0Z" fill="#d9d0c9" stroke="#c8b9ad" stroke-width="0.7"/>
<path d="M635.1,196.0 L641.6,207.2 L657.1,198.2 L650.6,187.0Z" fill="#d9d0c9" stroke="#c8b9ad" stroke-width="0.7"/>
<path d="M654.1,185.0 L660.6,196.2 L676.2,187.2 L669.7,176.0Z" fill="#d9d0c9" stroke="#c8b9ad" stroke-width="0.7"/>
<path d="M660.4,186.0 L662.9,190.3 L669.0,186.8 L666.5,182.5Z" fill="#e8e4df" />
<path d="M673.2,174.0 L679.7,185.2 L695.2,176.2 L688.7,165.0Z" fill="#d9d0c9" stroke="#c8b9ad" stroke-width="0.7"/>
<path d="M692.2,163.0 L698.7,174.2 L714.3,165.2 L707.8,154.0Z" fill="#d9d0c9" stroke="#c8b9ad" stroke-width="0.7"/>
<path d="M711.3,152.0 L717.8,163.2 L733.3,154.2 L726.8,143.0Z" fill="#d9d0c9" stroke="#c8b9ad" stroke-width="0.7"/>
<path d="M717.6,153.0 L720.1,157.3 L726.2,153.8 L723.7,149.5Z" fill="#e8e4df" />
<path d="M730.3,141.0 L736.8,152.2 L752.4,143.2 L745.9,132.0Z" fill="#d9d0c9" stroke="#c8b9ad" stroke-width="0.7"/>
<path d="M749.4,130.0 L755.9,141.2 L771.5,132.2 L765.0,121.0Z" fill="#d9d0c9" stroke="#c8b9ad" stroke-width="0.7"/>
<path d="M509.7,286.8 L516.2,298.1 L531.8,289.1 L525.3,277.8Z" fill="#d9d0c9" stroke="#c8b9ad" stroke-width="0.7"/>
<path d="M528.7,275.8 L535.2,287.1 L550.8,278.1 L544.3,266.8Z" fill="#d9d0c9" stroke="#c8b9ad" stroke-width="0.7"/>
<path d="M535.1,276.8 L537.6,281.1 L543.6,277.6 L541.1,273.3Z" fill="#e8e4df" />
<path d="M547.8,264.8 L554.3,276.1 L569.9,267.1 L563.4,255.8Z" fill="#d9d0c9" stroke="#c8b9ad" stroke-width="0.7"/>
<path d="M566.8,253.8 L573.3,265.1 L588.9,256.1 L582.4,244.8Z" fill="#d9d0c9" stroke="#c8b9ad" stroke-width="0.7"/>
<path d="M585.9,242.8 L592.4,254.1 L608.0,245.1 L601.5,233.8Z" fill="#d9d0c9" stroke="#c8b9ad" stroke-width="0.7"/>
<path d="M592.2,243.8 L594.7,248.1 L600.8,244.6 L598.3,240.3Z" fill="#e8e4df" />
<path d="M604.9,231.8 L611.4,243.1 L627.0,234.1 L620.5,222.8Z" fill="#d9d0c9" stroke="#c8b9ad" stroke-width="0.7"/>
<path d="M624.0,220.8 L630.5,232.1 L646.1,223.1 L639.6,211.8Z" fill="#d9d0c9" stroke="#c8b9ad" stroke-width="0.7"/>
<path d="M643.1,209.8 L649.6,221.1 L665.1,212.1 L658.6,200.8Z" fill="#d9d0c9" stroke="#c8b9ad" stroke-width="0.7"/>
<path d="M649.4,210.8 L651.9,215.1 L657.9,211.6 L655.4,207.3Z" fill="#e8e4df" />
<path d="M662.1,198.8 L668.6,210.1 L684.2,201.1 L677.7,189.8Z" fill="#d9d0c9" stroke="#c8b9ad" stroke-width="0.7"/>
<path d="M681.2,187.8 L687.7,199.1 L703.2,190.1 L696.7,178.8Z" fill="#d9d0c9" stroke="#c8b9ad" stroke-width="0.7"/>
<path d="M700.2,176.8 L706.7,188.1 L722.3,179.1 L715.8,167.8Z" fill="#d9d0c9" stroke="#c8b9ad" stroke-width="0.7"/>
<path d="M706.5,177.8 L709.0,182.1 L715.1,178.6 L712.6,174.3Z" fill="#e8e4df" />
<path d="M719.3,165.8 L725.8,177.1 L741.3,168.1 L734.8,156.8Z" fill="#d9d0c9" stroke="#c8b9ad" stroke-width="0.7"/>
<path d="M738.3,154.8 L744.8,166.1 L760.4,157.1 L753.9,145.8Z" fill="#d9d0c9" stroke="#c8b9ad" stroke-width="0.7"/>
<path d="M757.4,143.8 L763.9,155.1 L779.5,146.1 L773.0,134.8Z" fill="#d9d0c9" stroke="#c8b9ad" stroke-width="0.7"/>
<path d="M763.7,144.8 L766.2,149.1 L772.3,145.6 L769.8,141.3Z" fill="#e8e4df" />
<path d="M517.7,300.7 L524.2,312.0 L539.8,303.0 L533.3,291.7Z" fill="#d9d0c9" stroke="#c8b9ad" stroke-width="0.7"/>
<path d="M524.0,301.7 L526.5,306.0 L532.6,302.5 L530.1,298.2Z" fill="#e8e4df" />
<path d="M536.7,289.7 L543.2,301.0 L558.8,292.0 L552.3,280.7Z" fill="#d9d0c9" stroke="#c8b9ad" stroke-width="0.7"/>
<path d="M555.8,278.7 L562.3,290.0 L577.9,281.0 L571.4,269.7Z" fill="#d9d0c9" stroke="#c8b9ad" stroke-width="0.7"/>
<path d="M574.8,267.7 L581.3,279.0 L596.9,270.0 L590.4,258.7Z" fill="#d9d0c9" stroke="#c8b9ad" stroke-width="0.7"/>
<path d="M581.2,268.7 L583.7,273.0 L589.7,269.5 L587.2,265.2Z" fill="#e8e4df" />
<path d="M593.9,256.7 L600.4,268.0 L616.0,259.0 L609.5,247.7Z" fill="#d9d0c9" stroke="#c8b9ad" stroke-width="0.7"/>
<path d="M612.9,245.7 L619.4,257.0 L635.0,248.0 L628.5,236.7Z" fill="#d9d0c9" stroke="#c8b9ad" stroke-width="0.7"/>
<path d="M632.0,234.7 L638.5,246.0 L654.1,237.0 L647.6,225.7Z" fill="#d9d0c9" stroke="#c8b9ad" stroke-width="0.7"/>
<path d="M638.3,235.7 L640.8,240.0 L646.9,236.5 L644.4,232.2Z" fill="#e8e4df" />
<path d="M651.1,223.7 L657.6,235.0 L673.1,226.0 L666.6,214.7Z" fill="#d9d0c9" stroke="#c8b9ad" stroke-width="0.7"/>
<path d="M670.1,212.7 L676.6,224.0 L692.2,215.0 L685.7,203.7Z" fill="#d9d0c9" stroke="#c8b9ad" stroke-width="0.7"/>
<path d="M689.2,201.7 L695.7,213.0 L711.2,204.0 L704.7,192.7Z" fill="#d9d0c9" stroke="#c8b9ad" stroke-width="0.7"/>
<path d="M695.5,202.7 L698.0,207.0 L704.0,203.5 L701.5,199.2Z" fill="#e8e4df" />
<path d="M708.2,190.7 L714.7,202.0 L730.3,193.0 L723.8,181.7Z" fill="#d9d0c9" stroke="#c8b9ad" stroke-width="0.7"/>
<path d="M727.3,179.7 L733.8,191.0 L749.3,182.0 L742.8,170.7Z" fill="#d9d0c9" stroke="#c8b9ad" stroke-width="0.7"/>
<path d="M746.3,168.7 L752.8,180.0 L768.4,171.0 L761.9,159.7Z" fill="#d9d0c9" stroke="#c8b9ad" stroke-width="0.7"/>
<path d="M752.6,169.7 L755.1,174.0 L761.2,170.5 L758.7,166.2Z" fill="#e8e4df" />
<path d="M765.4,157.7 L771.9,169.0 L787.5,160.0 L781.0,148.7Z" fill="#d9d0c9" stroke="#c8b9ad" stroke-width="0.7"/>
<path d="M525.7,314.6 L532.2,325.8 L547.8,316.8 L541.3,305.6Z" fill="#d9d0c9" stroke="#c8b9ad" stroke-width="0.7"/>
<path d="M544.7,303.6 L551.2,314.8 L566.8,305.8 L560.3,294.6Z" fill="#d9d0c9" stroke="#c8b9ad" stroke-width="0.7"/>
<path d="M563.8,292.6 L570.3,303.8 L585.9,294.8 L579.4,283.6Z" fill="#d9d0c9" stroke="#c8b9ad" stroke-width="0.7"/>
<path d="M570.1,293.5 L572.6,297.9 L578.7,294.4 L576.2,290.0Z" fill="#e8e4df" />
<path d="M582.8,281.6 L589.3,292.8 L604.9,283.8 L598.4,272.6Z" fill="#d9d0c9" stroke="#c8b9ad" stroke-width="0.7"/>
<path d="M601.9,270.6 L608.4,281.8 L624.0,272.8 L617.5,261.6Z" fill="#d9d0c9" stroke="#c8b9ad" stroke-width="0.7"/>
<path d="M620.9,259.6 L627.4,270.8 L643.0,261.8 L636.5,250.6Z" fill="#d9d0c9" stroke="#c8b9ad" stroke-width="0.7"/>
<path d="M627.3,260.5 L629.8,264.9 L635.8,261.4 L633.3,257.0Z" fill="#e8e4df" />
<path d="M640.0,248.6 L646.5,259.8 L662.1,250.8 L655.6,239.6Z" fill="#d9d0c9" stroke="#c8b9ad" stroke-width="0.7"/>
<path d="M659.1,237.6 L665.6,248.8 L681.1,239.8 L674.6,228.6Z" fill="#d9d0c9" stroke="#c8b9ad" stroke-width="0.7"/>
<path d="M678.1,226.6 L684.6,237.8 L700.2,228.8 L693.7,217.6Z" fill="#d9d0c9" stroke="#c8b9ad" stroke-width="0.7"/>
<path d="M684.4,227.5 L686.9,231.9 L693.0,228.4 L690.5,224.0Z" fill="#e8e4df" />
<path d="M697.2,215.6 L703.7,226.8 L719.2,217.8 L712.7,206.6Z" fill="#d9d0c9" stroke="#c8b9ad" stroke-width="0.7"/>
<path d="M716.2,204.6 L722.7,215.8 L738.3,206.8 L731.8,195.6Z" fill="#d9d0c9" stroke="#c8b9ad" stroke-width="0.7"/>
<path d="M735.3,193.6 L741.8,204.8 L757.3,195.8 L750.8,184.6Z" fill="#d9d0c9" stroke="#c8b9ad" stroke-width="0.7"/>
<path d="M741.6,194.5 L744.1,198.9 L750.2,195.4 L747.7,191.0Z" fill="#e8e4df" />
<path d="M754.3,182.6 L760.8,193.8 L776.4,184.8 L769.9,173.6Z" fill="#d9d0c9" stroke="#c8b9ad" stroke-width="0.7"/>
<path d="M773.4,171.6 L779.9,182.8 L795.5,173.8 L789.0,162.6Z" fill="#d9d0c9" stroke="#c8b9ad" stroke-width="0.7"/>
<path d="M533.7,328.4 L540.2,339.7 L555.8,330.7 L549.3,319.4Z" fill="#d9d0c9" stroke="#c8b9ad" stroke-width="0.7"/>
<path d="M552.7,317.4 L559.2,328.7 L574.8,319.7 L568.3,308.4Z" fill="#d9d0c9" stroke="#c8b9ad" stroke-width="0.7"/>
<path d="M559.1,318.4 L561.6,322.7 L567.6,319.2 L565.1,314.9Z" fill="#e8e4df" />
<path d="M571.8,306.4 L578.3,317.7 L593.9,308.7 L587.4,297.4Z" fill="#d9d0c9" stroke="#c8b9ad" stroke-width="0.7"/>
<path d="M590.8,295.4 L597.3,306.7 L612.9,297.7 L606.4,286.4Z" fill="#d9d0c9" stroke="#c8b9ad" stroke-width="0.7"/>
<path d="M609.9,284.4 L616.4,295.7 L632.0,286.7 L625.5,275.4Z" fill="#d9d0c9" stroke="#c8b9ad" stroke-width="0.7"/>
<path d="M616.2,285.4 L618.7,289.7 L624.8,286.2 L622.3,281.9Z" fill="#e8e4df" />
<path d="M628.9,273.4 L635.4,284.7 L651.0,275.7 L644.5,264.4Z" fill="#d9d0c9" stroke="#c8b9ad" stroke-width="0.7"/>
<path d="M648.0,262.4 L654.5,273.7 L670.1,264.7 L663.6,253.4Z" fill="#d9d0c9" stroke="#c8b9ad" stroke-width="0.7"/>
<path d="M667.1,251.4 L673.6,262.7 L689.1,253.7 L682.6,242.4Z" fill="#d9d0c9" stroke="#c8b9ad" stroke-width="0.7"/>
<path d="M673.4,252.4 L675.9,256.7 L681.9,253.2 L679.4,248.9Z" fill="#e8e4df" />
<path d="M686.1,240.4 L692.6,251.7 L708.2,242.7 L701.7,231.4Z" fill="#d9d0c9" stroke="#c8b9ad" stroke-width="0.7"/>
<path d="M705.2,229.4 L711.7,240.7 L727.2,231.7 L720.7,220.4Z" fill="#d9d0c9" stroke="#c8b9ad" stroke-width="0.7"/>
<path d="M724.2,218.4 L730.7,229.7 L746.3,220.7 L739.8,209.4Z" fill="#d9d0c9" stroke="#c8b9ad" stroke-width="0.7"/>
<path d="M730.5,219.4 L733.0,223.7 L739.1,220.2 L736.6,215.9Z" fill="#e8e4df" />
<path d="M743.3,207.4 L749.8,218.7 L765.3,209.7 L758.8,198.4Z" fill="#d9d0c9" stroke="#c8b9ad" stroke-width="0.7"/>
<path d="M762.3,196.4 L768.8,207.7 L784.4,198.7 L777.9,187.4Z" fill="#d9d0c9" stroke="#c8b9ad" stroke-width="0.7"/>
<path d="M781.4,185.4 L787.9,196.7 L803.5,187.7 L797.0,176.4Z" fill="#d9d0c9" stroke="#c8b9ad" stroke-width="0.7"/>
<path d="M787.7,186.4 L790.2,190.7 L796.3,187.2 L793.8,182.9Z" fill="#e8e4df" />
<path d="M541.7,342.3 L548.2,353.5 L563.8,344.5 L557.3,333.3Z" fill="#d9d0c9" stroke="#c8b9ad" stroke-width="0.7"/>
<path d="M548.0,343.2 L550.5,347.6 L556.6,344.1 L554.1,339.7Z" fill="#e8e4df" />
<path d="M560.7,331.3 L567.2,342.5 L582.8,333.5 L576.3,322.3Z" fill="#d9d0c9" stroke="#c8b9ad" stroke-width="0.7"/>
<path d="M579.8,320.3 L586.3,331.5 L601.9,322.5 L595.4,311.3Z" fill="#d9d0c9" stroke="#c8b9ad" stroke-width="0.7"/>
<path d="M598.8,309.3 L605.3,320.5 L620.9,311.5 L614.4,300.3Z" fill="#d9d0c9" stroke="#c8b9ad" stroke-width="0.7"/>
<path d="M605.2,310.2 L607.7,314.6 L613.7,311.1 L611.2,306.7Z" fill="#e8e4df" />
<path d="M617.9,298.3 L624.4,309.5 L640.0,300.5 L633.5,289.3Z" fill="#d9d0c9" stroke="#c8b9ad" stroke-width="0.7"/>
<path d="M636.9,287.3 L643.4,298.5 L659.0,289.5 L652.5,278.3Z" fill="#d9d0c9" stroke="#c8b9ad" stroke-width="0.7"/>
<path d="M656.0,276.3 L662.5,287.5 L678.1,278.5 L671.6,267.3Z" fill="#d9d0c9" stroke="#c8b9ad" stroke-width="0.7"/>
<path d="M662.3,277.2 L664.8,281.6 L670.9,278.1 L668.4,273.7Z" fill="#e8e4df" />
<path d="M675.1,265.3 L681.6,276.5 L697.1,267.5 L690.6,256.3Z" fill="#d9d0c9" stroke="#c8b9ad" stroke-width="0.7"/>
<path d="M694.1,254.3 L700.6,265.5 L716.2,256.5 L709.7,245.3Z" fill="#d9d0c9" stroke="#c8b9ad" stroke-width="0.7"/>
<path d="M713.2,243.3 L719.7,254.5 L735.2,245.5 L728.7,234.3Z" fill="#d9d0c9" stroke="#c8b9ad" stroke-width="0.7"/>
<path d="M719.5,244.2 L722.0,248.6 L728.0,245.1 L725.5,240.7Z" fill="#e8e4df" />
<path d="M732.2,232.3 L738.7,243.5 L754.3,234.5 L747.8,223.3Z" fill="#d9d0c9" stroke="#c8b9ad" stroke-width="0.7"/>
<path d="M751.3,221.3 L757.8,232.5 L773.3,223.5 L766.8,212.3Z" fill="#d9d0c9" stroke="#c8b9ad" stroke-width="0.7"/>
<path d="M770.3,210.3 L776.8,221.5 L792.4,212.5 L785.9,201.3Z" fill="#d9d0c9" stroke="#c8b9ad" stroke-width="0.7"/>
<path d="M776.6,211.2 L779.1,215.6 L785.2,212.1 L782.7,207.7Z" fill="#e8e4df" />
<path d="M789.4,199.3 L795.9,210.5 L811.5,201.5 L805.0,190.3Z" fill="#d9d0c9" stroke="#c8b9ad" stroke-width="0.7"/>
<path d="M549.7,356.1 L556.2,367.4 L571.8,358.4 L565.3,347.1Z" fill="#d9d0c9" stroke="#c8b9ad" stroke-width="0.7"/>
<path d="M568.7,345.1 L575.2,356.4 L590.8,347.4 L584.3,336.1Z" fill="#d9d0c9" stroke="#c8b9ad" stroke-width="0.7"/>
<path d="M587.8,334.1 L594.3,345.4 L609.9,336.4 L603.4,325.1Z" fill="#d9d0c9" stroke="#c8b9ad" stroke-width="0.7"/>
<path d="M594.1,335.1 L596.6,339.4 L602.7,335.9 L600.2,331.6Z" fill="#e8e4df" />
<path d="M606.8,323.1 L613.3,334.4 L628.9,325.4 L622.4,314.1Z" fill="#d9d0c9" stroke="#c8b9ad" stroke-width="0.7"/>
<path d="M625.9,312.1 L632.4,323.4 L648.0,314.4 L641.5,303.1Z" fill="#d9d0c9" stroke="#c8b9ad" stroke-width="0.7"/>
<path d="M644.9,301.1 L651.4,312.4 L667.0,303.4 L660.5,292.1Z" fill="#d9d0c9" stroke="#c8b9ad" stroke-width="0.7"/>
<path d="M651.3,302.1 L653.8,306.4 L659.8,302.9 L657.3,298.6Z" fill="#e8e4df" />
<path d="M664.0,290.1 L670.5,301.4 L686.1,292.4 L679.6,281.1Z" fill="#d9d0c9" stroke="#c8b9ad" stroke-width="0.7"/>
<path d="M683.1,279.1 L689.6,290.4 L705.1,281.4 L698.6,270.1Z" fill="#d9d0c9" stroke="#c8b9ad" stroke-width="0.7"/>
<path d="M702.1,268.1 L708.6,279.4 L724.2,270.4 L717.7,259.1Z" fill="#d9d0c9" stroke="#c8b9ad" stroke-width="0.7"/>
<path d="M708.4,269.1 L710.9,273.4 L717.0,269.9 L714.5,265.6Z" fill="#e8e4df" />
<path d="M721.2,257.1 L727.7,268.4 L743.2,259.4 L736.7,248.1Z" fill="#d9d0c9" stroke="#c8b9ad" stroke-width="0.7"/>
<path d="M740.2,246.1 L746.7,257.4 L762.3,248.4 L755.8,237.1Z" fill="#d9d0c9" stroke="#c8b9ad" stroke-width="0.7"/>
<path d="M759.3,235.1 L765.8,246.4 L781.3,237.4 L774.8,226.1Z" fill="#d9d0c9" stroke="#c8b9ad" stroke-width="0.7"/>
<path d="M765.6,236.1 L768.1,240.4 L774.2,236.9 L771.7,232.6Z" fill="#e8e4df" />
<path d="M778.3,224.1 L784.8,235.4 L800.4,226.4 L793.9,215.1Z" fill="#d9d0c9" stroke="#c8b9ad" stroke-width="0.7"/>
<path d="M797.4,213.1 L803.9,224.4 L819.5,215.4 L813.0,204.1Z" fill="#d9d0c9" stroke="#c8b9ad" stroke-width="0.7"/>
<path d="M557.7,370.0 L564.2,381.2 L579.8,372.2 L573.3,361.0Z" fill="#d9d0c9" stroke="#c8b9ad" stroke-width="0.7"/>
<path d="M576.7,359.0 L583.2,370.2 L598.8,361.2 L592.3,350.0Z" fill="#d9d0c9" stroke="#c8b9ad" stroke-width="0.7"/>
<path d="M583.1,359.9 L585.6,364.3 L591.6,360.8 L589.1,356.4Z" fill="#e8e4df" />
<path d="M595.8,348.0 L602.3,359.2 L617.9,350.2 L611.4,339.0Z" fill="#d9d0c9" stroke="#c8b9ad" stroke-width="0.7"/>
<path d="M614.8,337.0 L621.3,348.2 L636.9,339.2 L630.4,328.0Z" fill="#d9d0c9" stroke="#c8b9ad" stroke-width="0.7"/>
<path d="M633.9,326.0 L640.4,337.2 L656.0,328.2 L649.5,317.0Z" fill="#d9d0c9" stroke="#c8b9ad" stroke-width="0.7"/>
<path d="M640.2,326.9 L642.7,331.3 L648.8,327.8 L646.3,323.4Z" fill="#e8e4df" />
<path d="M652.9,315.0 L659.4,326.2 L675.0,317.2 L668.5,306.0Z" fill="#d9d0c9" stroke="#c8b9ad" stroke-width="0.7"/>
<path d="M672.0,304.0 L678.5,315.2 L694.1,306.2 L687.6,295.0Z" fill="#d9d0c9" stroke="#c8b9ad" stroke-width="0.7"/>
<path d="M691.1,293.0 L697.6,304.2 L713.1,295.2 L706.6,284.0Z" fill="#d9d0c9" stroke="#c8b9ad" stroke-width="0.7"/>
<path d="M697.4,293.9 L699.9,298.3 L705.9,294.8 L703.4,290.4Z" fill="#e8e4df" />
<path d="M710.1,282.0 L716.6,293.2 L732.2,284.2 L725.7,273.0Z" fill="#d9d0c9" stroke="#c8b9ad" stroke-width="0.7"/>
<path d="M729.2,271.0 L735.7,282.2 L751.2,273.2 L744.7,262.0Z" fill="#d9d0c9" stroke="#c8b9ad" stroke-width="0.7"/>
<path d="M748.2,260.0 L754.7,271.2 L770.3,262.2 L763.8,251.0Z" fill="#d9d0c9" stroke="#c8b9ad" stroke-width="0.7"/>
<path d="M754.5,260.9 L757.0,265.3 L763.1,261.8 L760.6,257.4Z" fill="#e8e4df" />
<path d="M767.3,249.0 L773.8,260.2 L789.3,251.2 L782.8,240.0Z" fill="#d9d0c9" stroke="#c8b9ad" stroke-width="0.7"/>
<path d="M786.3,238.0 L792.8,249.2 L808.4,240.2 L801.9,229.0Z" fill="#d9d0c9" stroke="#c8b9ad" stroke-width="0.7"/>
<path d="M805.4,227.0 L811.9,238.2 L827.5,229.2 L821.0,218.0Z" fill="#d9d0c9" stroke="#c8b9ad" stroke-width="0.7"/>
<path d="M811.7,227.9 L814.2,232.3 L820.3,228.8 L817.8,224.4Z" fill="#e8e4df" />
<path d="M565.7,383.8 L572.2,395.1 L587.8,386.1 L581.3,374.8Z" fill="#d9d0c9" stroke="#c8b9ad" stroke-width="0.7"/>
<path d="M572.0,384.8 L574.5,389.1 L580.6,385.6 L578.1,381.3Z" fill="#e8e4df" />
<path d="M584.7,372.8 L591.2,384.1 L606.8,375.1 L600.3,363.8Z" fill="#d9d0c9" stroke="#c8b9ad" stroke-width="0.7"/>
<path d="M603.8,361.8 L610.3,373.1 L625.9,364.1 L619.4,352.8Z" fill="#d9d0c9" stroke="#c8b9ad" stroke-width="0.7"/>
<path d="M622.8,350.8 L629.3,362.1 L644.9,353.1 L638.4,341.8Z" fill="#d9d0c9" stroke="#c8b9ad" stroke-width="0.7"/>
<path d="M629.2,351.8 L631.7,356.1 L637.7,352.6 L635.2,348.3Z" fill="#e8e4df" />
<path d="M641.9,339.8 L648.4,351.1 L664.0,342.1 L657.5,330.8Z" fill="#d9d0c9" stroke="#c8b9ad" stroke-width="0.7"/>
<path d="M660.9,328.8 L667.4,340.1 L683.0,331.1 L676.5,319.8Z" fill="#d9d0c9" stroke="#c8b9ad" stroke-width="0.7"/>
<path d="M680.0,317.8 L686.5,329.1 L702.1,320.1 L695.6,308.8Z" fill="#d9d0c9" stroke="#c8b9ad" stroke-width="0.7"/>
<path d="M686.3,318.8 L688.8,323.1 L694.9,319.6 L692.4,315.3Z" fill="#e8e4df" />
<path d="M699.1,306.8 L705.6,318.1 L721.1,309.1 L714.6,297.8Z" fill="#d9d0c9" stroke="#c8b9ad" stroke-width="0.7"/>
<path d="M718.1,295.8 L724.6,307.1 L740.2,298.1 L733.7,286.8Z" fill="#d9d0c9" stroke="#c8b9ad" stroke-width="0.7"/>
<path d="M737.2,284.8 L743.7,296.1 L759.2,287.1 L752.7,275.8Z" fill="#d9d0c9" stroke="#c8b9ad" stroke-width="0.7"/>
<path d="M743.5,285.8 L746.0,290.1 L752.0,286.6 L749.5,282.3Z" fill="#e8e4df" />
<path d="M756.2,273.8 L762.7,285.1 L778.3,276.1 L771.8,264.8Z" fill="#d9d0c9" stroke="#c8b9ad" stroke-width="0.7"/>
<path d="M775.3,262.8 L781.8,274.1 L797.3,265.1 L790.8,253.8Z" fill="#d9d0c9" stroke="#c8b9ad" stroke-width="0.7"/>
<path d="M794.3,251.8 L800.8,263.1 L816.4,254.1 L809.9,242.8Z" fill="#d9d0c9" stroke="#c8b9ad" stroke-width="0.7"/>
<path d="M800.6,252.8 L803.1,257.1 L809.2,253.6 L806.7,249.3Z" fill="#e8e4df" />
<path d="M813.4,240.8 L819.9,252.1 L835.5,243.1 L829.0,231.8Z" fill="#d9d0c9" stroke="#c8b9ad" stroke-width="0.7"/>
</g>
<path d="M522,121 L545,112 L558,118 L566,163 L548,162 L530,150Z" fill="#cdf5c5" />
<path d="M540,125 L553,122 L556,140 L543,142Z" fill="#d9d0c9" stroke="#c8b9ad" stroke-width="0.7"/>
<path d="M548,146 L560,144 L562,160 L550,161Z" fill="#d9d0c9" stroke="#c8b9ad" stroke-width="0.7"/>
<path d="M553,120 L555,136 L574.6,184 L584,232 L616,286 L650,310" fill="none" stroke="#ffffff" stroke-width="7" stroke-linejoin="round" />
<path d="M455,150 L490,140 L500,170 L462,180Z" fill="#d9d0c9" />
<path d="M495,135 L530,132 L535,165 L505,170Z" fill="#d9d0c9" />
<path d="M460,190 L500,180 L505,215 L470,218Z" fill="#d9d0c9" />
<path d="M505,178 L540,172 L545,215 L510,220Z" fill="#d9d0c9" />
<path d="M505,228 L540,225 L542,242 L510,245Z" fill="#d9d0c9" />
<path d="M512,195 L532,192 L534,212 L514,214Z" fill="#b39f8d" />
<path d="M446,150 L455,134 L525,126 L548,150" fill="none" stroke="#ffffff" stroke-width="4" stroke-linejoin="round" />
<path d="M446,160 L470,216 L495,236 L542,246" fill="none" stroke="#ffffff" stroke-width="4" stroke-linejoin="round" />
<path d="M0,385 L176.5,360.5 L227.5,354.6 L325,353.6 L450.5,354.6 L540.7,361.5 L589.7,366.4 L650,359.5 L650,406 L0,406Z" fill="#e4e1de" />
<path d="M0,395 L45,388 L45,406 L0,406Z" fill="#cdf0c5" />
<path d="M46,392 L56,390 L57,400 L47,402Z" fill="#d9d0c9" stroke="#c8b9ad" stroke-width="0.7"/>
<path d="M60,389 L70,388 L71,398 L61,399Z" fill="#d9d0c9" stroke="#c8b9ad" stroke-width="0.7"/>
<path d="M75,388 L85,386 L86,396 L76,397Z" fill="#d9d0c9" stroke="#c8b9ad" stroke-width="0.7"/>
<path d="M48,402 L58,401 L58,406 L48,406Z" fill="#d9d0c9" stroke="#c8b9ad" stroke-width="0.7"/>
<path d="M82,399 L92,398 L92,406 L82,406Z" fill="#d9d0c9" stroke="#c8b9ad" stroke-width="0.7"/>
<path d="M94,381 L168.6,372 L168.6,406 L94,406Z" fill="#cdf5c5" />
<path d="M166.7,381 L200,378 L235,390 L235,406 L166.7,406Z" fill="#dcd4c8" />
<path d="M188,373 L325,370 L325,385 L250,388 L235,380 L205,378Z" fill="#d9d0c9" stroke="#c8b9ad" stroke-width="0.7"/>
<path d="M250,392 L320,390 L322,406 L252,406Z" fill="#d9d0c9" stroke="#c8b9ad" stroke-width="0.7"/>
<path d="M260,379 L300,377 L300,382 L262,384Z" fill="#f0eee9" />
<path d="M350.5,374 L497.5,372 L497.5,396.8 L350.5,396.8Z" fill="#cdf5c5" />
<path d="M355,398 L372,398 L372,406 L355,406Z" fill="#d9d0c9" stroke="#c8b9ad" stroke-width="0.7"/>
<path d="M420,385 L430,384 L432,406 L420,406Z" fill="#d9d0c9" stroke="#c8b9ad" stroke-width="0.7"/>
<path d="M440,387 L455,386 L456,406 L440,406Z" fill="#d9d0c9" stroke="#c8b9ad" stroke-width="0.7"/>
<path d="M460,388 L470,387 L470,400 L460,400Z" fill="#d9d0c9" stroke="#c8b9ad" stroke-width="0.7"/>
<path d="M500,372 L540,374 L540,390 L500,392Z" fill="#d9d0c9" stroke="#c8b9ad" stroke-width="0.7"/>
<path d="M505,395 L545,395 L545,406 L505,406Z" fill="#d9d0c9" stroke="#c8b9ad" stroke-width="0.7"/>
<path d="M550,376 L590,382 L588,400 L552,396Z" fill="#d9d0c9" stroke="#c8b9ad" stroke-width="0.7"/>
<path d="M335,385 L348,384 L348,406 L335,406Z" fill="#d9d0c9" stroke="#c8b9ad" stroke-width="0.7"/>
<path d="M470,380 L490,380 L490,392 L470,392Z" fill="#d9d0c9" stroke="#c8b9ad" stroke-width="0.7"/>
<path d="M621,363.5 L650,359.5 L650,381 L623,381Z" fill="#f4f2c4" />
<path d="M590,385 L650,381 L650,406 L595,406Z" fill="#f2ece6" />
<path d="M0,390 L176.5,367 L227.5,362 L325,361" fill="none" stroke="#ffffff" stroke-width="9" stroke-linejoin="round" />
<path d="M325,364 L450.5,362 L540.7,368 L591.7,374" fill="none" stroke="#ffffff" stroke-width="11" stroke-linejoin="round" />
<path d="M334,406 L337,385 L345,378 L420,371" fill="none" stroke="#ffffff" stroke-width="6" stroke-linejoin="round" />
<path d="M400,379 L420,406" fill="none" stroke="#ffffff" stroke-width="3" stroke-linejoin="round" />
<path d="M520,385 L548,390 L560,406" fill="none" stroke="#ffffff" stroke-width="4" stroke-linejoin="round" />
<path d="M0,385 L176.5,360.5 L227.5,354.6 L325,353.6 L450.5,354.6 L540.7,361.5 L589.7,366.4 L650,359.5" fill="none" stroke="#dddde8" stroke-width="3" stroke-linejoin="round" />
<path d="M10,403 L60,395 L110,385 L184,372" fill="none" stroke="#3344dd" stroke-width="0.9" stroke-linejoin="round" stroke-dasharray="2 2"/>
<path d="M120,406 L140,385 L190,378" fill="none" stroke="#3344dd" stroke-width="0.9" stroke-linejoin="round" stroke-dasharray="2 2"/>
<path d="M190,384 L350,380" fill="none" stroke="#3344dd" stroke-width="0.9" stroke-linejoin="round" stroke-dasharray="2 2"/>
<path d="M130,388 L160,392 L165,400" fill="none" stroke="#f08070" stroke-width="1.2" stroke-linejoin="round" stroke-dasharray="2 2"/>
<path d="M350,380 L355,397 L497,396 L497,373" fill="none" stroke="#f08070" stroke-width="1.2" stroke-linejoin="round" stroke-dasharray="2 2"/>
<path d="M600,382 L560,375 L545,395" fill="none" stroke="#f08070" stroke-width="1.2" stroke-linejoin="round" stroke-dasharray="2 2"/>
<path d="M380,12 L400,25 L425,50 L462,87 L497,132 L525,168 L551,216 L572,264 L580,290 L593,350 L607,406" fill="none" stroke="#222" stroke-width="12" stroke-linejoin="round" />
<path d="M380,12 L400,25 L425,50 L462,87 L497,132 L525,168 L551,216 L572,264 L580,290 L593,350 L607,406" fill="none" stroke="#777" stroke-width="10" stroke-linejoin="round" />
<path d="M380,12 L400,25 L425,50 L462,87 L497,132 L525,168 L551,216 L572,264 L580,290 L593,350 L607,406" fill="none" stroke="#ddd" stroke-width="1" stroke-linejoin="round" stroke-dasharray="3 3"/>
<path d="M372,10 L398,4 L425,40 L440,58 L428,62 L400,36Z" fill="#6a6a6a" />
<path d="M591.7,285.4 L650,350.4" fill="none" stroke="#333" stroke-width="9" stroke-linejoin="round" />
<path d="M591.7,285.4 L650,350.4" fill="none" stroke="#999" stroke-width="7" stroke-linejoin="round" />
<path d="M330,-2 L400,-2 L404,2 L372,12 L350,15Z" fill="#777" />
<path d="M422.8,30.2 L438.5,48 L477,87.2 L511,132 L537.7,168 L561.7,216 L582.6,264.2 L590,290 L604.7,354.8 L620,406" fill="none" stroke="#333" stroke-width="17" stroke-linejoin="round" />
<path d="M290,-7 L326,9 L350,16 L368.5,13 L386.6,5.5 L404.7,3 L414,11 L422.8,30.2 L440.9,54.3" fill="none" stroke="#333" stroke-width="15" stroke-linejoin="round" />
<path d="M413,-6 L416,8 L422.8,30.2" fill="none" stroke="#333" stroke-width="13" stroke-linejoin="round" />
<path d="M422,28 L428,12 L440,-6" fill="none" stroke="#333" stroke-width="11" stroke-linejoin="round" />
<path d="M422.8,30.2 L438.5,48 L477,87.2 L511,132 L537.7,168 L561.7,216 L582.6,264.2 L590,290 L604.7,354.8 L620,406" fill="none" stroke="#f9b29c" stroke-width="15" stroke-linejoin="round" />
<path d="M290,-7 L326,9 L350,16 L368.5,13 L386.6,5.5 L404.7,3 L414,11 L422.8,30.2 L440.9,54.3" fill="none" stroke="#f9b29c" stroke-width="13" stroke-linejoin="round" />
<path d="M413,-6 L416,8 L422.8,30.2" fill="none" stroke="#f9b29c" stroke-width="11" stroke-linejoin="round" />
<path d="M422,28 L428,12 L440,-6" fill="none" stroke="#f9b29c" stroke-width="9" stroke-linejoin="round" />
<path d="M464.7,49.4 L486.5,84.3 L492.3,98.8 L518.5,127.9 L530,160" fill="none" stroke="#777" stroke-width="5" stroke-linejoin="round" stroke-dasharray="4 3"/>
<path d="M461.8,94.5 L470.5,128 L478,170" fill="none" stroke="#777" stroke-width="5" stroke-linejoin="round" stroke-dasharray="4 3"/>
<path d="M502.8,235.5 L520,279 L533,315.7 L550.5,363.4" fill="none" stroke="#777" stroke-width="5" stroke-linejoin="round" stroke-dasharray="4 3"/>
<path d="M0,243 L385.7,243 L505,285.4 L555,242" fill="none" stroke="#a77dc2" stroke-width="1.6" stroke-linejoin="round" stroke-dasharray="1.2 3.2" stroke-linecap="round"/>
<path d="M505,285.4 L563.5,324.4 L650,339.6" fill="none" stroke="#a77dc2" stroke-width="1.6" stroke-linejoin="round" stroke-dasharray="1.2 3.2" stroke-linecap="round"/>
<path d="M385.7,243 L386.8,125.8" fill="none" stroke="#a77dc2" stroke-width="1.6" stroke-linejoin="round" stroke-dasharray="1.2 3.2" stroke-linecap="round"/>
<path d="M26,244 L0,289.7" fill="none" stroke="#a77dc2" stroke-width="1.6" stroke-linejoin="round" stroke-dasharray="1.2 3.2" stroke-linecap="round"/>
<path d="M386.8,125.8 L440,103 L505,80 L560,60" fill="none" stroke="#a77dc2" stroke-width="1.6" stroke-linejoin="round" stroke-dasharray="1.2 3.2" stroke-linecap="round"/>
<path d="M295,10 L320,60 L330,100" fill="none" stroke="#a77dc2" stroke-width="1.6" stroke-linejoin="round" stroke-dasharray="1.2 3.2" stroke-linecap="round"/>
<path d="M0,184.3 L130,162.6 L281.9,138.8" fill="none" stroke="#6c7ff0" stroke-width="1.3" stroke-linejoin="round" stroke-dasharray="5 4"/>
<path d="M0,188.5 L130,166.8 L281.9,143" fill="none" stroke="#6c7ff0" stroke-width="1.3" stroke-linejoin="round" stroke-dasharray="5 4"/>
<path d="M93.2,138.8 L180,203 L325,311.4 L383.5,352.6" fill="none" stroke="#6c7ff0" stroke-width="1.3" stroke-linejoin="round" stroke-dasharray="5 4"/>
<path d="M383.5,352.6 L453,211.7 L455,203 L390,91" fill="none" stroke="#6c7ff0" stroke-width="1.3" stroke-linejoin="round" stroke-dasharray="5 4"/>
<path d="M374.9,67 L374.9,125.8" fill="none" stroke="#6c7ff0" stroke-width="1.3" stroke-linejoin="round" stroke-dasharray="5 4"/>
<path d="M377.5,67 L377.5,125.8" fill="none" stroke="#6c7ff0" stroke-width="1.3" stroke-linejoin="round" stroke-dasharray="5 4"/>
<g transform="translate(85,129) scale(1)" stroke="#8a5cc4" fill="none" stroke-width="1.3"><circle cx="0" cy="-5" r="1.4"/><path d="M0,-3.6 V5 M-3,-2 H3 M-5,1 Q-4,5 0,5 Q4,5 5,1"/></g>
<g transform="translate(368,60) scale(1)" stroke="#8a5cc4" fill="none" stroke-width="1.3"><circle cx="0" cy="-5" r="1.4"/><path d="M0,-3.6 V5 M-3,-2 H3 M-5,1 Q-4,5 0,5 Q4,5 5,1"/></g>
<g transform="translate(390,60) scale(1)" stroke="#8a5cc4" fill="none" stroke-width="1.3"><circle cx="0" cy="-5" r="1.4"/><path d="M0,-3.6 V5 M-3,-2 H3 M-5,1 Q-4,5 0,5 Q4,5 5,1"/></g>
<g transform="translate(408,60) scale(1)" stroke="#8a5cc4" fill="none" stroke-width="1.3"><circle cx="0" cy="-5" r="1.4"/><path d="M0,-3.6 V5 M-3,-2 H3 M-5,1 Q-4,5 0,5 Q4,5 5,1"/></g>
<g transform="translate(459,203) scale(1)" stroke="#8a5cc4" fill="none" stroke-width="1.3"><circle cx="0" cy="-5" r="1.4"/><path d="M0,-3.6 V5 M-3,-2 H3 M-5,1 Q-4,5 0,5 Q4,5 5,1"/></g>
<g transform="translate(382,357) scale(1)" stroke="#8a5cc4" fill="none" stroke-width="1.3"><circle cx="0" cy="-5" r="1.4"/><path d="M0,-3.6 V5 M-3,-2 H3 M-5,1 Q-4,5 0,5 Q4,5 5,1"/></g>
<text x="10" y="113" font-family="Liberation Sans" font-size="10.5" fill="#222" stroke="#fff" stroke-width="2.5" paint-order="stroke" stroke-opacity="0.8">Norr Mälarstrand</text>
<text x="48" y="148" font-family="Liberation Sans" font-size="10" fill="#734a9f" font-style="italic" stroke="#fff" stroke-width="2.5" paint-order="stroke" stroke-opacity="0.8">Kungsholmstorg</text>
<text x="368" y="78" font-family="Liberation Sans" font-size="10" fill="#734a9f" font-style="italic" stroke="#fff" stroke-width="2.5" paint-order="stroke" stroke-opacity="0.8">Drottningholm,</text>
<text x="374" y="91" font-family="Liberation Sans" font-size="10" fill="#734a9f" font-style="italic" stroke="#fff" stroke-width="2.5" paint-order="stroke" stroke-opacity="0.8">Mälarlunch</text>
<text x="436" y="93" font-family="Liberation Sans" font-size="11" fill="#222" stroke="#fff" stroke-width="2.5" paint-order="stroke" stroke-opacity="0.8">Centralbron</text>
<text x="0" y="229" font-family="Liberation Sans" font-size="10" fill="#6a8cbf" >iddarfjärden</text>
<text x="528" y="71" font-family="Liberation Sans" font-size="10" fill="#6a8cbf" >Norrström</text>
<text x="562" y="47" font-family="Liberation Sans" font-size="10.5" fill="#222" stroke="#fff" stroke-width="2.5" paint-order="stroke" stroke-opacity="0.8">Riksbron</text>
<text x="470" y="191" font-family="Liberation Sans" font-size="10.5" fill="#222" font-style="italic" stroke="#fff" stroke-width="2.5" paint-order="stroke" stroke-opacity="0.8">Riddarholmen</text>
<text x="427" y="222" font-family="Liberation Sans" font-size="10" fill="#734a9f" font-style="italic" stroke="#fff" stroke-width="2.5" paint-order="stroke" stroke-opacity="0.8">Riddarholmen</text>
<text x="538" y="331" font-family="Liberation Sans" font-size="10" fill="#6a8cbf" >Söderström</text>
<text x="572" y="292" font-family="Liberation Sans" font-size="11" fill="#4b55b8" font-weight="bold" stroke="#fff" stroke-width="2.5" paint-order="stroke" stroke-opacity="0.8">Gamla</text>
<text x="580" y="304" font-family="Liberation Sans" font-size="11" fill="#4b55b8" font-weight="bold" stroke="#fff" stroke-width="2.5" paint-order="stroke" stroke-opacity="0.8">stan</text>
<rect x="584" y="268" width="9" height="9" fill="#7a88c8"/>
<text x="178" y="170" font-family="Liberation Sans" font-size="10" fill="#6c7ff0" transform="rotate(-9 178 170)">Båt 89: Tappström - Kla</text>
<text x="125" y="183" font-family="Liberation Sans" font-size="10" fill="#6c7ff0" transform="rotate(36 125 183)">Riddarfjärdslinjen 85: Kungsholmstorg - Klara Mälarstrand</text>
<text x="400" y="355" font-family="Liberation Sans" font-size="10" fill="#6c7ff0" transform="rotate(-63 400 355)">Riddarfjärdslinjen</text>
<text x="181" y="362" font-family="Liberation Sans" font-size="9.5" fill="#222" transform="rotate(-3 181 362)" stroke="#fff" stroke-width="2.5" paint-order="stroke" stroke-opacity="0.8">Söder Mälarstrandskajen</text>
<text x="455" y="365" font-family="Liberation Sans" font-size="10" fill="#222" transform="rotate(3 455 365)" stroke="#fff" stroke-width="2.5" paint-order="stroke" stroke-opacity="0.8">Söder Mälarstrand</text>
<text x="287" y="364" font-family="Liberation Sans" font-size="10" fill="#222" transform="rotate(2 287 364)" stroke="#fff" stroke-width="2.5" paint-order="stroke" stroke-opacity="0.8">Söder Mälarstrand</text>
<text x="337" y="380" font-family="Liberation Sans" font-size="10" fill="#222" transform="rotate(-3 337 380)" stroke="#fff" stroke-width="2.5" paint-order="stroke" stroke-opacity="0.8">Torkel Knutssonsgatan</text>
<text x="0" y="399" font-family="Liberation Sans" font-size="10" fill="#222" transform="rotate(-12 0 399)" stroke="#fff" stroke-width="2.5" paint-order="stroke" stroke-opacity="0.8">älarstrand</text>
<text x="572" y="44" font-family="Liberation Sans" font-size="10" fill="#222" ></text>
<text x="507" y="66" font-family="Liberation Sans" font-size="10" fill="#222" transform="rotate(56 507 66)" stroke="#fff" stroke-width="2.5" paint-order="stroke" stroke-opacity="0.8">Vasabron</text>
<text x="537" y="22" font-family="Liberation Sans" font-size="9.5" fill="#222" transform="rotate(-24 537 22)" stroke="#fff" stroke-width="2.5" paint-order="stroke" stroke-opacity="0.8">Fredsgatan</text>
<text x="620" y="19" font-family="Liberation Sans" font-size="10" fill="#222" stroke="#fff" stroke-width="2.5" paint-order="stroke" stroke-opacity="0.8">Norrbro</text>
<text x="494" y="133" font-family="Liberation Sans" font-size="9" fill="#222" transform="rotate(52 494 133)" stroke="#fff" stroke-width="2.5" paint-order="stroke" stroke-opacity="0.8">Arkivgatan</text>
<text x="618" y="206" font-family="Liberation Sans" font-size="9" fill="#222" transform="rotate(62 618 206)" stroke="#fff" stroke-width="2.5" paint-order="stroke" stroke-opacity="0.8">Stora Nygatan</text>
<text x="604" y="229" font-family="Liberation Sans" font-size="9" fill="#222" transform="rotate(62 604 229)" stroke="#fff" stroke-width="2.5" paint-order="stroke" stroke-opacity="0.8">Lilla Nygatan</text>
<text x="586" y="256" font-family="Liberation Sans" font-size="9.5" fill="#222" transform="rotate(38 586 256)" stroke="#fff" stroke-width="2.5" paint-order="stroke" stroke-opacity="0.8">Munkbroleden Mun</text>
<text x="162" y="101" font-family="Liberation Sans" font-size="9" fill="#222" transform="rotate(-80 162 101)" stroke="#fff" stroke-width="2.5" paint-order="stroke" stroke-opacity="0.8">Skillinggränd</text>
<text x="187" y="37" font-family="Liberation Sans" font-size="9" fill="#222" transform="rotate(-80 187 37)" stroke="#fff" stroke-width="2.5" paint-order="stroke" stroke-opacity="0.8">Kaplansbacken</text>
<text x="10" y="108" font-family="Liberation Sans" font-size="9.5" fill="#222" transform="rotate(-76 10 108)" stroke="#fff" stroke-width="2.5" paint-order="stroke" stroke-opacity="0.8">Kungsholmsgatan</text>
<text x="541" y="180" font-family="Liberation Sans" font-size="10" fill="#222" transform="rotate(64 541 180)">Centralbron</text>
<text x="639" y="190" font-family="Liberation Sans" font-size="14" fill="#333" stroke="#fff" stroke-width="2.5" paint-order="stroke" stroke-opacity="0.8">St</text>
<rect x="594" y="358" width="25" height="27" rx="3" fill="#f7d7cd" stroke="#c99" stroke-width="0.6"/>
<text x="599" y="370" font-family="Liberation Sans" font-size="9.5" fill="#733" >E4</text>
<text x="596" y="382" font-family="Liberation Sans" font-size="9.5" fill="#733" >E20</text>
<rect x="608" y="393" width="42" height="13" fill="#fff" fill-opacity="0.8"/>
<text x="612" y="403" font-family="Liberation Sans" font-size="10.5" fill="#0078a8" >Leaflet</text>
<rect x="10.3" y="10.3" width="26" height="52" rx="3" fill="#fff" stroke="rgba(0,0,0,0.25)" stroke-width="1.5"/>
<path d="M10.3,35.5 H36.3" stroke="#ccc" stroke-width="1"/>
<path d="M18,24 H28 M23,19 V29 M18,50 H28" stroke="#000" stroke-width="2"/>
<defs><filter id="blur" x="-50%" y="-50%" width="200%" height="200%"><feGaussianBlur stdDeviation="3"/></filter><linearGradient id="pin" x1="0" y1="0" x2="0" y2="1"><stop offset="0" stop-color="#3d8fd6"/><stop offset="1" stop-color="#1f6fc0"/></linearGradient></defs>
<rect x="281" y="96" width="90" height="62" rx="12" fill="#000" fill-opacity="0.25" filter="url(#blur)"/>
<path d="M338,173 l-10,-10 h20z" fill="#000" fill-opacity="0.2" filter="url(#blur)"/>
<ellipse cx="337" cy="192" rx="8" ry="14" transform="rotate(-35 337 192)" fill="#000" fill-opacity="0.45" filter="url(#blur)"/>
<path d="M325.5,163 C318.5,163 313.5,168 313.5,175 C313.5,182 320,190 325.5,202.5 C331,190 337.5,182 337.5,175 C337.5,168 332.5,163 325.5,163Z" fill="url(#pin)" stroke="#245f9a" stroke-width="0.8"/>
<circle cx="325.5" cy="175" r="4" fill="#fff"/>
<rect x="280" y="94" width="91" height="62" rx="12" fill="#fff"/>
<path d="M315.5,155 L325.5,166 L335.5,155Z" fill="#fff"/>
<path d="M357,102 l7.5,7.5 M364.5,102 l-7.5,7.5" stroke="#c3c3c3" stroke-width="1.6"/>
<text x="300.5" y="119.5" font-family="Liberation Sans" font-size="12" fill="#333" font-weight="bold">Sweden</text>
<text x="300.5" y="136.5" font-family="Liberation Sans" font-size="12" fill="#333" >null, null</text>
</svg>

<!-- left panel 2 -->
<div class="panel" style="left:24px;top:547px;width:658px;height:380px">
  <div class="ph" style="height:42px"></div>
</div>
<div class="abs" style="left:40px;top:558px;font-size:14.5px;color:#333"><b>Attribute.category</b> overtime (hours)</div>
<svg class="abs" style="left:0;top:0;pointer-events:none" width="700" height="936" viewBox="0 0 700 936">
<path d="M39.3,897.5 H670.6 M39.3,860.5 H670.6 M39.3,823.5 H670.6 M39.3,786.5 H670.6 M39.3,749.5 H670.6 M39.3,712.5 H670.6 M39.3,675.5 H670.6 M39.3,638.5 H670.6 M39.3,601.5 H670.6 M39.3,601.5 V897.5 M103.71836734693878,601.5 V897.5 M168.13673469387754,601.5 V897.5 M232.55510204081634,601.5 V897.5 M296.97346938775513,601.5 V897.5 M361.3918367346939,601.5 V897.5 M425.8102040816327,601.5 V897.5 M490.2285714285715,601.5 V897.5 M554.6469387755102,601.5 V897.5 M619.065306122449,601.5 V897.5 M670.6,601.5 V897.5" stroke="#dcdcdc" stroke-width="1" fill="none"/>
<text x="34.5" y="901.5" text-anchor="end" font-family="Liberation Sans" font-size="11" fill="#545454">0</text>
<text x="34.5" y="864.5" text-anchor="end" font-family="Liberation Sans" font-size="11" fill="#545454">1</text>
<text x="34.5" y="827.5" text-anchor="end" font-family="Liberation Sans" font-size="11" fill="#545454">2</text>
<text x="34.5" y="790.5" text-anchor="end" font-family="Liberation Sans" font-size="11" fill="#545454">3</text>
<text x="34.5" y="753.5" text-anchor="end" font-family="Liberation Sans" font-size="11" fill="#545454">4</text>
<text x="34.5" y="716.5" text-anchor="end" font-family="Liberation Sans" font-size="11" fill="#545454">5</text>
<text x="34.5" y="679.5" text-anchor="end" font-family="Liberation Sans" font-size="11" fill="#545454">6</text>
<text x="34.5" y="642.5" text-anchor="end" font-family="Liberation Sans" font-size="11" fill="#545454">7</text>
<text x="34.5" y="605.5" text-anchor="end" font-family="Liberation Sans" font-size="11" fill="#545454">8</text>
<text x="39.3" y="915" text-anchor="middle" font-family="Liberation Sans" font-size="11" fill="#545454">0</text>
<text x="103.71836734693878" y="915" text-anchor="middle" font-family="Liberation Sans" font-size="11" fill="#545454">5</text>
<text x="168.13673469387754" y="915" text-anchor="middle" font-family="Liberation Sans" font-size="11" fill="#545454">10</text>
<text x="232.55510204081634" y="915" text-anchor="middle" font-family="Liberation Sans" font-size="11" fill="#545454">15</text>
<text x="296.97346938775513" y="915" text-anchor="middle" font-family="Liberation Sans" font-size="11" fill="#545454">20</text>
<text x="361.3918367346939" y="915" text-anchor="middle" font-family="Liberation Sans" font-size="11" fill="#545454">25</text>
<text x="425.8102040816327" y="915" text-anchor="middle" font-family="Liberation Sans" font-size="11" fill="#545454">30</text>
<text x="490.2285714285715" y="915" text-anchor="middle" font-family="Liberation Sans" font-size="11" fill="#545454">35</text>
<text x="554.6469387755102" y="915" text-anchor="middle" font-family="Liberation Sans" font-size="11" fill="#545454">40</text>
<text x="619.065306122449" y="915" text-anchor="middle" font-family="Liberation Sans" font-size="11" fill="#545454">45</text>
<defs><linearGradient id="gy" x1="0" y1="0" x2="0" y2="1"><stop offset="0" stop-color="#edc240" stop-opacity="0.25"/><stop offset="1" stop-color="#edc240" stop-opacity="0.95"/></linearGradient><linearGradient id="gp" x1="0" y1="0" x2="0" y2="1"><stop offset="0" stop-color="#9440ed" stop-opacity="0.85"/><stop offset="1" stop-color="#9440ed" stop-opacity="1"/></linearGradient></defs>
<path d="M644.8326530612245,897.5 L670.6,601.5 L670.6,897.5Z" fill="url(#gy)"/>
<path d="M644.8326530612245,897.5 L670.6,823.5 L670.6,897.5Z" fill="url(#gp)"/>
<path d="M644.8326530612245,897.5 L670.6,601.5" stroke="#edc240" stroke-width="2" fill="none"/>
<path d="M39.3,897.5 L644.8326530612245,897.5 L670.6,823.5" stroke="#9440ed" stroke-width="2" fill="none"/>
<circle cx="670.6" cy="601.5" r="3" fill="#fff" stroke="#edc240" stroke-width="2"/>
<circle cx="39.3" cy="897.5" r="3" fill="#fff" stroke="#9440ed" stroke-width="2"/>
<circle cx="52.2" cy="897.5" r="3" fill="#fff" stroke="#9440ed" stroke-width="2"/>
<circle cx="65.1" cy="897.5" r="3" fill="#fff" stroke="#9440ed" stroke-width="2"/>
<circle cx="78.0" cy="897.5" r="3" fill="#fff" stroke="#9440ed" stroke-width="2"/>
<circle cx="90.8" cy="897.5" r="3" fill="#fff" stroke="#9440ed" stroke-width="2"/>
<circle cx="103.7" cy="897.5" r="3" fill="#fff" stroke="#9440ed" stroke-width="2"/>
<circle cx="116.6" cy="897.5" r="3" fill="#fff" stroke="#9440ed" stroke-width="2"/>
<circle cx="129.5" cy="897.5" r="3" fill="#fff" stroke="#9440ed" stroke-width="2"/>
<circle cx="142.4" cy="897.5" r="3" fill="#fff" stroke="#9440ed" stroke-width="2"/>
<circle cx="155.3" cy="897.5" r="3" fill="#fff" stroke="#9440ed" stroke-width="2"/>
<circle cx="168.1" cy="897.5" r="3" fill="#fff" stroke="#9440ed" stroke-width="2"/>
<circle cx="181.0" cy="897.5" r="3" fill="#fff" stroke="#9440ed" stroke-width="2"/>
<circle cx="193.9" cy="897.5" r="3" fill="#fff" stroke="#9440ed" stroke-width="2"/>
<circle cx="206.8" cy="897.5" r="3" fill="#fff" stroke="#9440ed" stroke-width="2"/>
<circle cx="219.7" cy="897.5" r="3" fill="#fff" stroke="#9440ed" stroke-width="2"/>
<circle cx="232.6" cy="897.5" r="3" fill="#fff" stroke="#9440ed" stroke-width="2"/>
<circle cx="245.4" cy="897.5" r="3" fill="#fff" stroke="#9440ed" stroke-width="2"/>
<circle cx="258.3" cy="897.5" r="3" fill="#fff" stroke="#9440ed" stroke-width="2"/>
<circle cx="271.2" cy="897.5" r="3" fill="#fff" stroke="#9440ed" stroke-width="2"/>
<circle cx="284.1" cy="897.5" r="3" fill="#fff" stroke="#9440ed" stroke-width="2"/>
<circle cx="297.0" cy="897.5" r="3" fill="#fff" stroke="#9440ed" stroke-width="2"/>
<circle cx="309.9" cy="897.5" r="3" fill="#fff" stroke="#9440ed" stroke-width="2"/>
<circle cx="322.7" cy="897.5" r="3" fill="#fff" stroke="#9440ed" stroke-width="2"/>
<circle cx="335.6" cy="897.5" r="3" fill="#fff" stroke="#9440ed" stroke-width="2"/>
<circle cx="348.5" cy="897.5" r="3" fill="#fff" stroke="#9440ed" stroke-width="2"/>
<circle cx="361.4" cy="897.5" r="3" fill="#fff" stroke="#9440ed" stroke-width="2"/>
<circle cx="374.3" cy="897.5" r="3" fill="#fff" stroke="#9440ed" stroke-width="2"/>
<circle cx="387.2" cy="897.5" r="3" fill="#fff" stroke="#9440ed" stroke-width="2"/>
<circle cx="400.0" cy="897.5" r="3" fill="#fff" stroke="#9440ed" stroke-width="2"/>
<circle cx="412.9" cy="897.5" r="3" fill="#fff" stroke="#9440ed" stroke-width="2"/>
<circle cx="425.8" cy="897.5" r="3" fill="#fff" stroke="#9440ed" stroke-width="2"/>
<circle cx="438.7" cy="897.5" r="3" fill="#fff" stroke="#9440ed" stroke-width="2"/>
<circle cx="451.6" cy="897.5" r="3" fill="#fff" stroke="#9440ed" stroke-width="2"/>
<circle cx="464.5" cy="897.5" r="3" fill="#fff" stroke="#9440ed" stroke-width="2"/>
<circle cx="477.3" cy="897.5" r="3" fill="#fff" stroke="#9440ed" stroke-width="2"/>
<circle cx="490.2" cy="897.5" r="3" fill="#fff" stroke="#9440ed" stroke-width="2"/>
<circle cx="503.1" cy="897.5" r="3" fill="#fff" stroke="#9440ed" stroke-width="2"/>
<circle cx="516.0" cy="897.5" r="3" fill="#fff" stroke="#9440ed" stroke-width="2"/>
<circle cx="528.9" cy="897.5" r="3" fill="#fff" stroke="#9440ed" stroke-width="2"/>
<circle cx="541.8" cy="897.5" r="3" fill="#fff" stroke="#9440ed" stroke-width="2"/>
<circle cx="554.6" cy="897.5" r="3" fill="#fff" stroke="#9440ed" stroke-width="2"/>
<circle cx="567.5" cy="897.5" r="3" fill="#fff" stroke="#9440ed" stroke-width="2"/>
<circle cx="580.4" cy="897.5" r="3" fill="#fff" stroke="#9440ed" stroke-width="2"/>
<circle cx="593.3" cy="897.5" r="3" fill="#fff" stroke="#9440ed" stroke-width="2"/>
<circle cx="606.2" cy="897.5" r="3" fill="#fff" stroke="#9440ed" stroke-width="2"/>
<circle cx="619.1" cy="897.5" r="3" fill="#fff" stroke="#9440ed" stroke-width="2"/>
<circle cx="631.9" cy="897.5" r="3" fill="#fff" stroke="#9440ed" stroke-width="2"/>
<circle cx="644.8" cy="897.5" r="3" fill="#fff" stroke="#9440ed" stroke-width="2"/>
<circle cx="670.6" cy="823.5" r="3" fill="#fff" stroke="#9440ed" stroke-width="2"/>
<rect x="43" y="605" width="137" height="84" fill="#fff" fill-opacity="0.85"/>
<rect x="44.9" y="607.8" width="12" height="12" fill="#fff" stroke="#ccc" stroke-width="1"/>
<rect x="46" y="609.0" width="10" height="10" fill="#edc240"/>
<text x="57.8" y="618.8" font-family="Liberation Sans" font-size="11.7" fill="#545454">Network activity</text>
<rect x="44.9" y="624.8" width="12" height="12" fill="#fff" stroke="#ccc" stroke-width="1"/>
<rect x="46" y="626.0" width="10" height="10" fill="#afd8f8"/>
<text x="57.8" y="635.8" font-family="Liberation Sans" font-size="11.7" fill="#545454">Antivirus detection</text>
<rect x="44.9" y="641.8" width="12" height="12" fill="#fff" stroke="#ccc" stroke-width="1"/>
<rect x="46" y="643.0" width="10" height="10" fill="#cb4b4b"/>
<text x="57.8" y="652.8" font-family="Liberation Sans" font-size="11.7" fill="#545454">Persistence mechanism</text>
<rect x="44.9" y="658.8" width="12" height="12" fill="#fff" stroke="#ccc" stroke-width="1"/>
<rect x="46" y="660.0" width="10" height="10" fill="#4da74d"/>
<text x="57.8" y="669.8" font-family="Liberation Sans" font-size="11.7" fill="#545454">Internal reference</text>
<rect x="44.9" y="675.8" width="12" height="12" fill="#fff" stroke="#ccc" stroke-width="1"/>
<rect x="46" y="677.0" width="10" height="10" fill="#9440ed"/>
<text x="57.8" y="686.8" font-family="Liberation Sans" font-size="11.7" fill="#545454">Financial fraud</text>
</svg>

<!-- world map panel -->
<div class="panel" style="left:712px;top:69px;width:934px;height:295px"></div>
<svg class="abs" style="left:716px;top:73px" width="926" height="287" viewBox="716 73 926 287">
<rect x="716" y="73" width="926" height="287" fill="#505050"/>
<path d="M930.1,121.5 L940.3,121.7 L950.0,119.3 L964.4,122.3 L974.1,125.9 L982.5,125.3 L994.6,124.1 L1006.7,125.9 L1016.3,125.3 L1018.7,133.8 L1028.4,135.0 L1036.8,136.2 L1040.4,131.4 L1051.3,136.2 L1058.5,150.7 L1068.2,162.7 L1073.0,172.4 L1060.9,174.8 L1053.7,182.0 L1048.9,177.2 L1036.8,179.6 L1026.0,184.4 L1017.5,176.0 L1005.5,171.2 L958.4,171.2 L952.4,167.6 L948.8,157.9 L945.7,153.7 L937.9,147.6 L930.1,145.8Z" fill="#fff"/>
<path d="M889.0,124.1 L895.7,119.3 L905.3,116.9 L916.2,118.7 L930.1,121.5 L930.1,145.8 L937.9,147.6 L945.7,153.7 L948.8,157.9 L945.7,156.7 L937.9,150.7 L928.3,145.8 L918.6,144.6 L913.8,147.0 L906.5,153.1 L892.1,159.7 L902.9,150.7 L910.2,145.8 L896.9,147.0 L890.3,145.2 L895.7,139.8 L887.2,132.6 L894.5,129.0Z" fill="#00bcad"/>
<path d="M1005.5,145.8 L1015.1,136.2 L1024.8,137.4 L1034.4,143.4 L1033.2,154.3 L1030.8,165.1 L1027.2,161.5 L1024.8,155.5 L1012.7,153.1Z" fill="#505050"/>
<path d="M954.8,114.0 L964.4,106.8 L971.7,109.2 L980.1,102.0 L988.6,103.2 L993.4,111.6 L994.6,121.3 L988.6,126.1 L974.1,124.9 L964.4,118.8Z" fill="#fff"/>
<path d="M960.8,100.7 L969.3,95.9 L971.7,99.5 L964.4,102.0Z" fill="#fff"/>
<path d="M969.3,102.0 L986.2,100.7 L987.4,104.4 L975.3,105.6Z" fill="#fff"/>
<path d="M976.5,92.3 L980.1,91.1 L981.3,94.7 L976.5,95.9Z" fill="#fff"/>
<path d="M988.6,89.9 L995.8,92.3 L994.6,94.7 L989.8,93.5Z" fill="#fff"/>
<path d="M993.4,99.5 L1000.6,99.5 L1001.8,103.2 L995.8,104.4Z" fill="#fff"/>
<path d="M1003.0,85.1 L1011.5,80.2 L1024.8,76.6 L1058.5,76.6 L1048.9,85.1 L1036.8,92.3 L1024.8,97.1 L1012.7,93.5Z" fill="#fff"/>
<path d="M1006.7,99.5 L1029.6,100.7 L1028.4,105.6 L1007.9,104.4Z" fill="#fff"/>
<path d="M1000.6,109.2 L1007.9,108.0 L1010.3,112.8 L1003.0,115.2Z" fill="#fff"/>
<path d="M1012.7,111.6 L1028.4,109.2 L1036.8,118.8 L1048.9,124.9 L1057.3,130.9 L1051.3,138.1 L1039.2,133.3 L1027.2,128.5 L1019.9,123.7 L1013.9,118.8Z" fill="#fff"/>
<path d="M1019.9,129.7 L1026.0,130.9 L1024.8,136.9 L1020.5,135.7Z" fill="#fff"/>
<path d="M958.3,172.2 L1015.6,172.8 L1021.8,178.4 L1028.0,179.9 L1034.2,176.8 L1048.2,175.3 L1051.3,181.5 L1046.6,184.6 L1043.5,190.8 L1037.3,197.0 L1032.7,203.2 L1028.0,206.3 L1029.6,215.5 L1026.5,214.0 L1023.4,209.3 L1015.6,207.8 L1009.4,209.3 L1000.2,215.5 L990.9,207.8 L980.0,205.6 L969.2,203.2 L959.9,195.4 L957.7,184.6Z" fill="#00bcad"/>
<path d="M969.2,203.2 L980.0,205.6 L990.9,207.8 L1000.2,215.5 L1003.3,221.7 L1006.3,227.9 L1012.5,227.9 L1014.1,223.3 L1018.7,224.8 L1015.6,231.0 L1021.8,237.2 L1024.9,241.9 L1031.1,243.4 L1029.6,246.5 L1023.4,245.0 L1018.7,240.3 L1011.0,234.1 L1000.2,227.9 L987.8,223.3 L978.5,215.5 L972.3,210.9 L970.7,206.3Z" fill="#fff"/>
<path d="M969.8,204.7 L976.9,214.0 L981.6,219.3 L978.5,219.3 L971.6,209.3Z" fill="#fff"/>
<path d="M1023.4,221.1 L1037.3,223.3 L1048.2,227.3 L1038.9,227.0 L1024.9,223.6Z" fill="#fff"/>
<path d="M1022.8,242.5 L1033.9,243.9 L1043.6,238.3 L1061.7,245.3 L1075.6,252.2 L1086.7,260.6 L1103.3,268.9 L1101.9,275.8 L1096.4,285.6 L1092.2,295.3 L1081.1,302.2 L1075.6,310.6 L1072.8,316.1 L1065.8,324.4 L1054.7,330.0 L1050.6,341.1 L1047.8,350.8 L1050.6,359.2 L1043.6,359.2 L1038.1,343.9 L1040.8,327.2 L1045.0,302.2 L1046.4,288.3 L1036.7,282.8 L1028.3,266.1 L1029.7,257.8 L1033.9,250.8Z" fill="#fff"/>
<path d="M1043.5,91.6 L1062.1,79.2 L1086.9,76.1 L1117.9,77.6 L1128.8,85.4 L1121.0,107.1 L1108.6,119.5 L1093.1,135.0 L1086.9,145.8 L1080.7,139.6 L1074.5,119.5 L1068.3,102.4Z" fill="#fff"/>
<path d="M1071,249.5 L1075,249.5 L1074.5,253.5 L1071,253Z" fill="#0a73b8"/>
<path d="M1146.4,195.5 L1144.8,184.8 L1147.5,182.6 L1160.3,183.7 L1158.2,178.4 L1153.4,172.0 L1160.3,170.4 L1166.7,168.8 L1169.9,164.5 L1174.2,161.3 L1175.8,154.9 L1172.1,150.6 L1168.8,144.2 L1171.0,139.9 L1177.4,133.5 L1184.9,125.0 L1193.4,119.6 L1202.0,117.5 L1209.4,118.5 L1216.9,126.0 L1225.5,129.2 L1232.9,128.2 L1241.5,125.0 L1257.5,122.8 L1268.2,116.4 L1278.9,114.3 L1290.0,114.3 L1326.9,104.0 L1339.3,100.9 L1354.8,104.0 L1370.0,108.6 L1374.4,113.3 L1393.0,116.4 L1417.8,117.9 L1436.3,121.0 L1454.9,124.1 L1468.9,130.3 L1461.1,135.0 L1451.8,135.0 L1445.6,142.7 L1433.3,144.3 L1427.1,141.2 L1422.4,147.4 L1406.9,150.5 L1393.0,150.5 L1382.1,159.8 L1379.0,172.2 L1372.8,181.5 L1362.0,189.2 L1354.2,193.9 L1358.9,200.1 L1357.3,209.3 L1349.6,218.6 L1340.3,224.8 L1359.5,190.0 L1356.9,197.6 L1359.5,206.5 L1356.9,214.1 L1351.9,219.1 L1344.3,221.7 L1337.9,224.2 L1334.1,228.0 L1337.9,233.1 L1336.7,239.4 L1331.6,243.2 L1324.0,241.9 L1325.3,249.5 L1327.8,253.3 L1324.0,245.7 L1321.5,240.7 L1318.9,234.3 L1315.1,231.8 L1313.9,226.7 L1310.1,220.4 L1306.3,222.3 L1298.7,225.5 L1291.1,233.1 L1286.0,244.5 L1282.2,234.3 L1278.4,223.6 L1273.3,219.8 L1268.3,216.6 L1260.7,216.0 L1253.1,217.2 L1256.9,222.9 L1251.8,228.0 L1241.7,234.3 L1232.2,238.1 L1229.0,234.3 L1222.7,225.5 L1217.6,215.3 L1212.5,206.5 L1219.1,201.9 L1214.8,195.5 L1204.1,195.5 L1197.7,195.5 L1161.4,191.2 L1151.8,195.5Z" fill="#fff"/>
<path d="M1146.4,198.7 L1151.8,195.5 L1161.4,191.2 L1163.5,186.9 L1172.1,183.7 L1179.5,181.6 L1187.0,191.2 L1190.2,190.1 L1185.9,184.8 L1180.6,178.4 L1187.0,179.4 L1195.6,186.9 L1198.2,192.3 L1199.8,188.0 L1204.1,188.0 L1205.2,194.4 L1216.9,194.9 L1219.1,195.5 L1219.1,204.0 L1214.8,210.0 L1146.4,210.0Z" fill="#505050"/>
<path d="M1206.2,184.8 L1209.4,178.4 L1214.8,176.2 L1222.3,175.2 L1226.5,178.4 L1224.4,186.9 L1214.8,188.0 L1208.4,186.9Z" fill="#505050"/>
<path d="M1237.2,180.5 L1241.5,176.2 L1246.8,177.3 L1245.8,184.8 L1247.9,193.3 L1245.8,195.5 L1241.5,193.3 L1239.4,186.9Z" fill="#505050"/>
<path d="M1177.4,158.1 L1180.6,154.9 L1182.7,157.0 L1188.1,152.7 L1189.1,145.3 L1193.4,137.8 L1197.7,131.4 L1201.4,133.0 L1199.8,137.8 L1198.2,145.3 L1207.3,146.3 L1204.1,148.5 L1199.8,150.6 L1199.3,154.9 L1195.6,159.1 L1185.9,159.1 L1180.6,160.2Z" fill="#505050"/>
<path d="M1214.8,129.2 L1223.3,130.3 L1225.5,134.6 L1219.1,136.7 L1216.9,133.5Z" fill="#505050"/>
<path d="M1239.1,207.7 L1245.5,211.5 L1251.8,214.1 L1253.1,217.9 L1248.0,217.2 L1244.2,216.6 L1241.7,214.1Z" fill="#505050"/>
<path d="M1179.5,179.4 L1182.7,178.4 L1188.1,184.8 L1195.6,190.1 L1192.4,192.3 L1189.1,191.2 L1187.0,195.5 L1184.9,193.3 L1185.9,189.1 L1181.7,184.8Z" fill="#fff"/>
<path d="M1197.7,186.9 L1199.8,188.0 L1202.0,194.4 L1198.2,195.5 L1196.6,191.2Z" fill="#fff"/>
<path d="M1151.8,150.6 L1156.0,151.7 L1157.1,158.1 L1162.4,163.4 L1164.6,167.7 L1161.4,169.3 L1152.8,169.8 L1155.0,165.6 L1151.8,161.3 L1152.8,155.9Z" fill="#fff"/>
<path d="M1144.3,161.3 L1150.7,159.1 L1151.8,165.6 L1145.3,166.6Z" fill="#fff"/>
<path d="M1179.5,155.9 L1180.1,145.3 L1181.7,136.7 L1187.0,128.2 L1192.4,123.4 L1197.7,123.9 L1198.8,128.7 L1198.2,132.4 L1193.4,137.8 L1189.1,145.3 L1188.1,152.7 L1182.7,157.0Z" fill="#0a73b8"/>
<path d="M1153.9,172.5 L1160.3,170.9 L1166.7,168.8 L1172.1,172.0 L1171.0,179.4 L1172.1,183.7 L1161.4,184.8 L1158.2,178.4Z" fill="#0a73b8"/>
<path d="M1149.6,198.7 L1159.2,196.5 L1172.1,195.5 L1175.3,194.4 L1177.4,199.7 L1185.9,204.0 L1199.8,204.0 L1208.4,204.0 L1216.9,202.9 L1219.1,201.9 L1212.5,209.0 L1217.6,217.9 L1222.7,228.0 L1229.0,236.9 L1234.1,240.0 L1241.7,240.0 L1235.3,250.8 L1229.0,259.7 L1225.2,266.0 L1223.9,276.1 L1221.4,286.3 L1224.7,271.3 L1224.7,283.7 L1216.9,296.1 L1209.2,308.5 L1199.9,316.3 L1191.2,316.3 L1185.9,302.3 L1181.3,286.8 L1181,274 L1175.3,255.3 L1167,249.4 L1147,250.6 L1140,247 L1133,241 L1132.9,224 L1135,215 L1144.7,205.9 L1149.4,197.6Z" fill="#fff"/>
<path d="M1235.5,286.8 L1241.7,279.1 L1240.2,296.1 L1234.0,300.8 L1232.4,293.0Z" fill="#fff"/>
<path d="M1122.4,130.3 L1131.7,128.8 L1137.9,133.4 L1130.1,138.1 L1123.9,135.0Z" fill="#fff"/>
<path d="M1178.2,88.5 L1190.6,85.4 L1203.0,86.9 L1190.6,96.2 L1181.3,94.7Z" fill="#fff"/>
<path d="M1246.3,113.3 L1271.1,99.3 L1266.5,104.0 L1251.0,116.4Z" fill="#fff"/>
<path d="M1311.4,85.4 L1323.8,88.5 L1317.6,93.1Z" fill="#fff"/>
<path d="M1414.7,166.0 L1417.8,150.5 L1427.1,142.7 L1424.0,155.1 L1417.8,166.0Z" fill="#fff"/>
<path d="M1372.8,203.2 L1383.7,197.0 L1391.4,187.7 L1393.0,179.9 L1394.5,166.0 L1391.4,162.9 L1389.9,178.4 L1383.7,190.8 L1374.4,195.4 L1369.7,201.6Z" fill="#fff"/>
<path d="M1309.3,85.4 L1318.6,83.8 L1323.2,90.0 L1317.0,93.1Z" fill="#fff"/>
<path d="M1383.7,102.4 L1396.1,102.4 L1389.9,105.5Z" fill="#fff"/>
<path d="M1346.5,296.1 L1365.1,286.8 L1375.9,279.1 L1383.7,274.4 L1393.0,277.5 L1396.1,286.8 L1405.4,296.1 L1410.0,308.5 L1405.4,317.8 L1393.0,320.9 L1383.7,317.8 L1372.8,311.6 L1362.0,311.6 L1351.1,317.8 L1348.0,308.5Z" fill="#fff"/>
<path d="M1316.4,250.8 L1320.2,252.1 L1327.8,260.9 L1332.9,267.3 L1330.3,267.3 L1321.5,258.4Z" fill="#fff"/>
<path d="M1333.5,269.2 L1341.7,271.1 L1348.1,273.0 L1339.2,271.1Z" fill="#fff"/>
<path d="M1339.2,257.1 L1345.5,252.1 L1351.9,249.5 L1353.1,258.4 L1350.6,263.5 L1344.3,264.7 L1340.5,260.9Z" fill="#fff"/>
<path d="M1355.7,260.9 L1359.5,259.7 L1358.2,266.0 L1360.7,267.3 L1356.9,266.0Z" fill="#fff"/>
<path d="M1356.9,229.3 L1359.5,230.5 L1362.0,238.1 L1365.8,244.5 L1363.9,248.3 L1359.5,244.5 L1357.6,235.6Z" fill="#fff"/>
<path d="M1374.7,260.9 L1383.5,263.5 L1389.9,264.7 L1397.5,268.5 L1405.1,274.9 L1397.5,273.6 L1389.9,271.1 L1381.0,268.5Z" fill="#fff"/>
<path d="M1290.4,243.8 L1293.0,245.7 L1292.3,248.3 L1291.1,248.3Z" fill="#fff"/>
<path d="M1356.9,217.2 L1358.4,218.5 L1357.6,221.0Z" fill="#fff"/>
<path d="M1243.3,172.2 L1258.7,161.3 L1283.5,162.9 L1302.1,169.1 L1326.9,166.0 L1345.5,172.2 L1370.0,166.0" fill="none" stroke="#9a9a9a" stroke-width="0.6"/>
<path d="M1295.9,175.3 L1311.4,179.9 L1326.9,181.5 L1345.5,175.3 L1370.0,175.3" fill="none" stroke="#9a9a9a" stroke-width="0.6"/>
<path d="M1274.2,209.3 L1295.9,206.3 L1314.5,214.0 L1326.9,218.6 L1339.3,218.6" fill="none" stroke="#9a9a9a" stroke-width="0.6"/>
<path d="M1246.3,195.4 L1264.9,190.8 L1278.9,203.2 L1283.5,218.6" fill="none" stroke="#9a9a9a" stroke-width="0.6"/>
<path d="M1258.7,178.4 L1271.1,190.8 L1295.9,187.7 L1302.1,203.2" fill="none" stroke="#9a9a9a" stroke-width="0.6"/>
<path d="M1227.8,209.3 L1243.3,218.6 L1255.6,221.7" fill="none" stroke="#9a9a9a" stroke-width="0.6"/>
<path d="M1133,226 L1150,222 L1163,232 L1178,236 L1192,232 L1205,238" fill="none" stroke="#9a9a9a" stroke-width="0.6"/>
<path d="M1150,210 L1168,222" fill="none" stroke="#9a9a9a" stroke-width="0.6"/>
<path d="M1168,222 L1180,215 L1196,214 L1200,205" fill="none" stroke="#9a9a9a" stroke-width="0.6"/>
<path d="M1200,214 L1200,222 L1219,222" fill="none" stroke="#9a9a9a" stroke-width="0.6"/>
<path d="M1178,236 L1182,246 L1195,249 L1210,244 L1222,250" fill="none" stroke="#9a9a9a" stroke-width="0.6"/>
<path d="M1163,232 L1160,245" fill="none" stroke="#9a9a9a" stroke-width="0.6"/>
<path d="M1145,240 L1158,240" fill="none" stroke="#9a9a9a" stroke-width="0.6"/>
<path d="M1185,255 L1205,253 L1222,258" fill="none" stroke="#9a9a9a" stroke-width="0.6"/>
<path d="M1195,249 L1192,262 L1185,268" fill="none" stroke="#9a9a9a" stroke-width="0.6"/>
<path d="M1185,268 L1208,270 L1220,266" fill="none" stroke="#9a9a9a" stroke-width="0.6"/>
<path d="M1206,253 L1208,282" fill="none" stroke="#9a9a9a" stroke-width="0.6"/>
<path d="M1192,280 L1215,283" fill="none" stroke="#9a9a9a" stroke-width="0.6"/>
<path d="M1185,290 L1205,290" fill="none" stroke="#9a9a9a" stroke-width="0.6"/>
<path d="M1222,250 L1228,240" fill="none" stroke="#9a9a9a" stroke-width="0.6"/>
<path d="M1210,244 L1215,232" fill="none" stroke="#9a9a9a" stroke-width="0.6"/>
<path d="M1172.0,159.8 L1184.4,166.0 L1196.8,166.0 L1212.3,162.9" fill="none" stroke="#9a9a9a" stroke-width="0.6"/>
<path d="M1175.1,172.2 L1187.5,178.4 L1203.0,175.3 L1215.4,172.2" fill="none" stroke="#9a9a9a" stroke-width="0.6"/>
<path d="M1181.3,162.9 L1181.3,184.6" fill="none" stroke="#9a9a9a" stroke-width="0.6"/>
<path d="M1196.8,153.6 L1199.9,178.4" fill="none" stroke="#9a9a9a" stroke-width="0.6"/>
<path d="M1203.0,147.4 L1209.2,166.0 L1227.8,166.0" fill="none" stroke="#9a9a9a" stroke-width="0.6"/>
<path d="M1300.0,172.2 L1318.6,166.0 L1337.2,169.1 L1352.7,175.3 L1371.3,172.2" fill="none" stroke="#9a9a9a" stroke-width="0.6"/>
<path d="M1300.0,212.4 L1312.4,209.3 L1321.7,218.6 L1331.0,218.6" fill="none" stroke="#9a9a9a" stroke-width="0.6"/>
<path d="M1039.4,271.7 L1047.8,274.4 L1056.1,275.8 L1065.8,285.6 L1072.8,302.2 L1065.8,310.6" fill="none" stroke="#9a9a9a" stroke-width="0.6"/>
<path d="M1046.4,288.3 L1051.9,295.3 L1058.9,291.1 L1065.8,292.5" fill="none" stroke="#9a9a9a" stroke-width="0.6"/>
<path d="M1049.2,293.9 L1047.8,307.8 L1043.6,327.2 L1040.8,348.1" fill="none" stroke="#9a9a9a" stroke-width="0.6"/>
<path d="M1028.3,266.1 L1039.4,264.7 L1045.0,261.9" fill="none" stroke="#9a9a9a" stroke-width="0.6"/>
<path d="M1038.1,241.1 L1050.6,252.2 L1061.7,248.1 L1068.6,255.0" fill="none" stroke="#9a9a9a" stroke-width="0.6"/>
<path d="M1061.7,313.3 L1072.8,311.9" fill="none" stroke="#9a9a9a" stroke-width="0.6"/>
<path d="M1050.6,252.2 L1047.8,264.7 L1040.8,267.5" fill="none" stroke="#9a9a9a" stroke-width="0.6"/>
<path d="M1006.3,227.9 L1015.6,234.1" fill="none" stroke="#9a9a9a" stroke-width="0.6"/>
<circle cx="1000" cy="194" r="5.2" fill="#ffee55" stroke="#666" stroke-width="0.8"/>
<circle cx="1189" cy="148" r="5.2" fill="#ffee55" stroke="#666" stroke-width="0.8"/>
<circle cx="1163" cy="172" r="5.2" fill="#ffee55" stroke="#666" stroke-width="0.8"/>
<circle cx="1137" cy="235" r="5.2" fill="#ffee55" stroke="#666" stroke-width="0.8"/>
<rect x="726" y="83" width="16" height="16" rx="3" fill="#292929"/><rect x="726" y="103" width="16" height="16" rx="3" fill="#292929"/>
<path d="M730.5,93.5 h7 M734,90 v7 M730.5,112.5 h7" stroke="#fff" stroke-width="1.3"/>
<rect x="1386" y="314" width="246" height="36" rx="3" fill="#000"/>
<rect x="1389" y="317" width="40" height="15" fill="#0039c2"/>
<rect x="1429" y="317" width="40" height="15" fill="#00bcad"/>
<rect x="1469" y="317" width="40" height="15" fill="#00bd21"/>
<rect x="1509" y="317" width="40" height="15" fill="#6cbd00"/>
<rect x="1549" y="317" width="40" height="15" fill="#bd8c00"/>
<rect x="1589" y="317" width="40" height="15" fill="#bd0b00"/>
<text x="1409" y="346" fill="#fff" font-family="Liberation Sans" font-size="12" text-anchor="middle">0</text>
<text x="1449" y="346" fill="#fff" font-family="Liberation Sans" font-size="12" text-anchor="middle">2</text>
<text x="1489" y="346" fill="#fff" font-family="Liberation Sans" font-size="12" text-anchor="middle">4</text>
<text x="1529" y="346" fill="#fff" font-family="Liberation Sans" font-size="12" text-anchor="middle">6</text>
<text x="1569" y="346" fill="#fff" font-family="Liberation Sans" font-size="12" text-anchor="middle">8</text>
<text x="1609" y="346" fill="#fff" font-family="Liberation Sans" font-size="12" text-anchor="middle">10</text>
</svg>

<!-- logs panel -->
<div class="panel" style="left:712px;top:384px;width:934px;height:543px">
  <div class="ph" style="height:42px"></div>
</div>
<div class="abs" style="left:728px;top:397px;font-size:14.5px;color:#333">Logs</div>
<div class="abs cb" style="left:1399px;top:400px"></div><div class="abs" style="left:1418px;top:400px;font-size:14px;color:#333">INFO</div>
<div class="abs cb on" style="left:1457px;top:400px"></div><div class="abs" style="left:1476px;top:400px;font-size:14px;color:#333">WARNING</div>
<div class="abs cb on" style="left:1547px;top:400px"></div><div class="abs" style="left:1566px;top:400px;font-size:14px;color:#333">CRITICAL</div>
<div id="logs">
<table class="t" style="left:713px;top:427px;width:932px;table-layout:fixed">
<colgroup><col style="width:73px"><col style="width:73px"><col style="width:273px"><col style="width:163px"><col style="width:111px"><col style="width:238px"></colgroup>
<tr><th>Time</th><th>Event.id</th><th>Attribute.Tag</th><th>Attribute.category</th><th>Attribute.type</th><th>Attribute.value |<br>Attribute.comment</th></tr>
<tr class="odd"><td>15:07:46</td><td>9356</td><td class="tg"><div style="height:40px;display:flow-root"><span class="lbl" style="background:#80ff00;color:#000">circl:topic="undefined"</span><span class="lbl l2" style="background:#fff;color:#000">tlp:white</span></div></td><td>Network activity</td><td>ip-src</td><td>99.99.99.99</td></tr>
<tr><td>15:08:36</td><td>9356</td><td class="tg"><div style="height:32px;display:flow-root"><span class="lbl dos" style="background:#2f6000;color:#fff;width:256px;margin-top:-1px;padding-bottom:3px">circl:incident-classification="denial-of-<br>service"</span></div></td><td>Network activity</td><td>ip-src</td><td>8.8.8.8</td></tr>
<tr class="odd"><td>15:08:36</td><td>9356</td><td class="tg"><div style="height:41px;display:flow-root"><span class="lbl" style="background:#3a7c00;color:#fff">circl:incident-classification="malware"</span><span class="lbl l2" style="background:#408400;color:#fff">circl:incident-classification="XSS"</span></div></td><td>Antivirus detection</td><td>comment</td><td>Comment</td></tr>
<tr><td>15:08:36</td><td>9356</td><td class="tg"><div style="height:20px;display:flow-root"></div></td><td>Network activity</td><td>ip-src</td><td>9.9.9.9</td></tr>
<tr class="odd"><td>15:08:36</td><td>9356</td><td class="tg"><div style="height:40px;display:flow-root"></div></td><td>Persistence<br>mechanism</td><td>text</td><td>Just a another test</td></tr>
<tr><td>15:08:36</td><td>9356</td><td class="tg"><div style="height:20px;display:flow-root"></div></td><td>Internal reference</td><td>text</td><td>Another text</td></tr>
<tr class="odd"><td>15:08:36</td><td>9356</td><td class="tg"><div style="height:20px;display:flow-root"></div></td><td>Financial fraud</td><td>phone-number</td><td>+221721120220</td></tr>
<tr><td>15:08:36</td><td>9356</td><td class="tg"><div style="height:20px;display:flow-root"></div></td><td>Network activity</td><td>ip-src</td><td>62.102.148.67</td></tr>
<tr class="odd"><td>15:08:36</td><td>9356</td><td class="tg"><div style="height:41px;display:flow-root"><span class="lbl" style="background:#80ff00;color:#000">circl:topic="undefined"</span><span class="lbl l2" style="background:#fff;color:#000">tlp:white</span></div></td><td>Network activity</td><td>ip-src</td><td>99.99.99.99</td></tr>
</table>
</div>
</body></html>
